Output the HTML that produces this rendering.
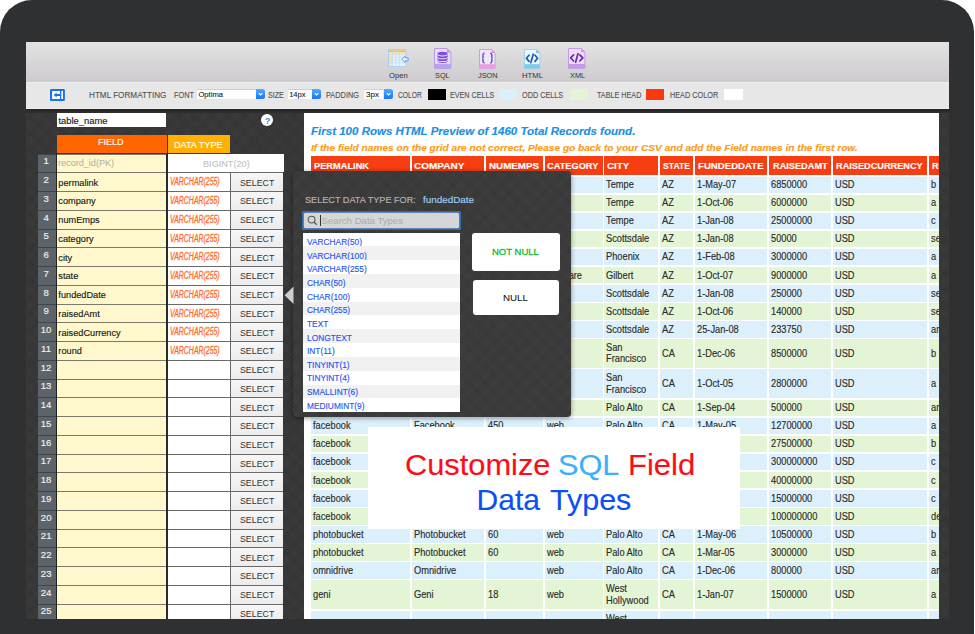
<!DOCTYPE html>
<html><head><meta charset="utf-8">
<style>
*{box-sizing:border-box;margin:0;padding:0}
html,body{width:975px;height:634px;overflow:hidden;background:#fff;font-family:"Liberation Sans",sans-serif}
.a{position:absolute}
.t{position:absolute;white-space:nowrap;transform-origin:0 0;-webkit-text-stroke:0.15px}
.frame{position:absolute;left:0;top:0;width:974px;height:760px;border-radius:32px;background:#2f3032}
.tex{background-color:#373737;background-image:repeating-linear-gradient(45deg,rgba(255,255,255,.03) 0 1px,transparent 1px 2px),repeating-linear-gradient(-45deg,rgba(0,0,0,.1) 0 1px,transparent 1px 2px)}
.sel{position:absolute;background:#fff;box-shadow:0 -0.6px 0 #bdbdbd}
.selb{position:absolute;background:linear-gradient(#55a8ff,#1677f5);border-radius:0 2.5px 2.5px 0}
.rn{position:absolute;left:37.6px;width:18.4px;background:#5c6369;border-top:1.3px solid #3f444a}
.fc{position:absolute;left:57px;width:109.3px;background:#fef8cc;border-top:1.4px solid #7d7a6c}
.tc{position:absolute;left:168px;width:61.5px;background:#fff;border-top:1.4px solid #6a6a6a}
.sc{position:absolute;left:231px;width:52.4px;background:linear-gradient(#f6f6f6,#ececec);border-top:1.4px solid #6a6a6a}
.ph{position:absolute;background:#f73d12}
.pc{position:absolute}
.li{position:absolute;left:303.3px;width:157px;height:13.815px}
.btn{position:absolute;background:#fff;border-radius:3px}
</style></head><body>
<div class="frame"></div>
<div class="a" style="left:26px;top:41.7px;width:923px;height:40.3px;background:linear-gradient(#e3e2e3,#cdcbcd)"></div>
<div class="a" style="left:26px;top:82px;width:923px;height:26.5px;background:#e7e7e7;border-top:1px solid #eeeeee;border-bottom:1px solid #f3f3f3"></div>
<div class="a tex" style="left:26px;top:109px;width:923px;height:510px"></div>
<div class="a" style="left:26px;top:108.5px;width:923px;height:4.5px;background:linear-gradient(#1e1e1e,#2a2a2a 40%,#2f2f2f)"></div>

<svg class="a" style="left:388px;top:48.9px" width="21" height="18" viewBox="0 0 21 18">
<rect x="0.5" y="0.5" width="17.3" height="17" fill="#fbfdff" stroke="#a9cff2" stroke-width="1"/>
<rect x="1" y="1.3" width="16.3" height="2.1" fill="#f7b84e"/>
<rect x="1" y="3.6" width="16.3" height="1.9" fill="#fde99a"/>
<rect x="1" y="3.6" width="3.2" height="13.4" fill="#fde99a"/>
<rect x="4.6" y="5.8" width="12.7" height="11" fill="#e9f4fd"/>
<g stroke="#bcd8f2" stroke-width=".7"><line x1="4.4" y1="1" x2="4.4" y2="17"/><line x1="7.8" y1="1" x2="7.8" y2="17"/><line x1="11.3" y1="1" x2="11.3" y2="17"/><line x1="1" y1="5.6" x2="17.3" y2="5.6"/><line x1="1" y1="8.3" x2="17.3" y2="8.3"/><line x1="1" y1="11" x2="17.3" y2="11"/><line x1="1" y1="13.7" x2="17.3" y2="13.7"/></g>
<path d="M13.8 10.3 L17.2 7.1 L17.2 8.8 L20.1 8.8 L20.1 11.8 L17.2 11.8 L17.2 13.5 Z" fill="#e8f6fe" stroke="#4d9be0" stroke-width=".9"/>
</svg>
<svg class="a" style="left:434.3px;top:48.1px" width="17.4" height="21" viewBox="0 0 17.4 21">
<path d="M0.5 0.5 H13.2 L16.9 4.2 V20.4 H0.5 Z" fill="#e6dbfb" stroke="#b69ce8" stroke-width="1"/>
<path d="M13 0.5 V4.4 H16.9 Z" fill="#b69ce8"/>
<rect x="0.5" y="15.8" width="16.4" height="4.6" fill="#b9a2ec"/>
<ellipse cx="8.6" cy="5.6" rx="5.1" ry="1.9" fill="#7d4fd2"/>
<path d="M3.5 6.6 v1.8 a5.1 1.9 0 0 0 10.2 0 v-1.8 a5.1 1.9 0 0 1 -10.2 0z" fill="#7d4fd2"/>
<path d="M3.5 9.4 v1.8 a5.1 1.9 0 0 0 10.2 0 v-1.8 a5.1 1.9 0 0 1 -10.2 0z" fill="#7d4fd2"/>
<path d="M3.5 12.2 v0.8 a5.1 1.9 0 0 0 10.2 0 v-0.8 a5.1 1.9 0 0 1 -10.2 0z" fill="#7d4fd2"/>
</svg>
<svg class="a" style="left:479.3px;top:48.9px" width="17" height="20" viewBox="0 0 17 20">
<path d="M0.5 0.5 H12.7 L16.1 3.9 V19.4 H0.5 Z" fill="#efe6fb" stroke="#b9a8e8" stroke-width="1"/>
<path d="M12.5 0.5 V4.1 H16.1 Z" fill="#f08ad8"/>
<rect x="0.5" y="15.2" width="15.6" height="4.4" fill="#ea9ee0"/>
<path d="M5.6 4.2 Q4 4.2 4 5.6 V8.2 Q4 9.3 3.2 9.3 Q4 9.3 4 10.4 V12.6 Q4 14 5.6 14" stroke="#6c58c0" stroke-width="1.5" fill="none"/>
<path d="M11.2 4.2 Q12.8 4.2 12.8 5.6 V8.2 Q12.8 9.3 13.6 9.3 Q12.8 9.3 12.8 10.4 V12.6 Q12.8 14 11.2 14" stroke="#6c58c0" stroke-width="1.5" fill="none"/>
</svg>
<svg class="a" style="left:524.3px;top:48.9px" width="17" height="20" viewBox="0 0 17 20">
<path d="M0.5 0.5 H12.4 L15.8 3.9 V19.4 H0.5 Z" fill="#e8f8fc" stroke="#9fd6ec" stroke-width="1"/>
<path d="M12.2 0.5 V4.1 H15.8 Z" fill="#6cc0e0"/>
<rect x="0.5" y="15.1" width="15.3" height="4.5" fill="#7fcbe6"/>
<path d="M5 6.2 L2.4 9.3 L5 12.4 M11 6.2 L13.6 9.3 L11 12.4 M9.2 5.2 L6.9 13.6" stroke="#1f55b5" stroke-width="1.7" fill="none" stroke-linecap="round" stroke-linejoin="round"/>
</svg>
<svg class="a" style="left:568.3px;top:48.1px" width="18" height="21" viewBox="0 0 18 21">
<path d="M0.5 0.5 H13.3 L16.9 4.1 V20.2 H0.5 Z" fill="#efdefb" stroke="#c39ae6" stroke-width="1"/>
<path d="M13.1 0.5 V4.3 H16.9 Z" fill="#c39ae6"/>
<rect x="0.5" y="15.9" width="16.4" height="4.7" fill="#c19be6"/>
<path d="M5.6 6.8 L2.6 9.9 L5.6 13 M11.8 6.8 L14.8 9.9 L11.8 13 M10 5.6 L7.6 14.2" stroke="#6a2aaa" stroke-width="1.7" fill="none" stroke-linecap="round" stroke-linejoin="round"/>
</svg>
<div class="t" style="left:388.65px;top:71.51px;font-size:7.9px;line-height:7.9px;color:#333;transform:scaleX(0.979);-webkit-text-stroke:0px">Open</div>
<div class="t" style="left:435.47px;top:71.51px;font-size:7.9px;line-height:7.9px;color:#333;transform:scaleX(0.927);-webkit-text-stroke:0px">SQL</div>
<div class="t" style="left:478.19px;top:71.51px;font-size:7.9px;line-height:7.9px;color:#333;transform:scaleX(0.936);-webkit-text-stroke:0px">JSON</div>
<div class="t" style="left:521.68px;top:71.51px;font-size:7.9px;line-height:7.9px;color:#333;transform:scaleX(0.975);-webkit-text-stroke:0px">HTML</div>
<div class="t" style="left:569.52px;top:71.51px;font-size:7.9px;line-height:7.9px;color:#333;transform:scaleX(0.930);-webkit-text-stroke:0px">XML</div>
<svg class="a" style="left:50.1px;top:89px" width="15" height="12" viewBox="0 0 15 12">
<rect x="0" y="0" width="14.9" height="12" rx="1.2" fill="#1a6ff5"/>
<rect x="2.1" y="2" width="7.9" height="8" fill="#fff"/>
<rect x="11.3" y="2" width="1.7" height="8" fill="#fff"/>
<path d="M3.7 6 L6.6 3.5 V5.1 H10 V6.9 H6.6 V8.5 Z" fill="#1a6ff5"/>
</svg>
<div class="t" style="left:88.95px;top:91.39px;font-size:8.4px;line-height:8.4px;color:#525252;transform:scaleX(0.973);-webkit-text-stroke:0.1px">HTML FORMATTING</div>
<div class="t" style="left:174.11px;top:91.39px;font-size:8.4px;line-height:8.4px;color:#525252;transform:scaleX(0.877);-webkit-text-stroke:0.1px">FONT</div>
<div class="t" style="left:268.38px;top:91.39px;font-size:8.4px;line-height:8.4px;color:#525252;transform:scaleX(0.853);-webkit-text-stroke:0.1px">SIZE</div>
<div class="t" style="left:326.41px;top:91.39px;font-size:8.4px;line-height:8.4px;color:#525252;transform:scaleX(0.880);-webkit-text-stroke:0.1px">PADDING</div>
<div class="t" style="left:398.26px;top:91.39px;font-size:8.4px;line-height:8.4px;color:#525252;transform:scaleX(0.805);-webkit-text-stroke:0.1px">COLOR</div>
<div class="t" style="left:450.02px;top:91.39px;font-size:8.4px;line-height:8.4px;color:#525252;transform:scaleX(0.857);-webkit-text-stroke:0.1px">EVEN CELLS</div>
<div class="t" style="left:522.37px;top:91.39px;font-size:8.4px;line-height:8.4px;color:#525252;transform:scaleX(0.867);-webkit-text-stroke:0.1px">ODD CELLS</div>
<div class="t" style="left:596.86px;top:91.39px;font-size:8.4px;line-height:8.4px;color:#525252;transform:scaleX(0.861);-webkit-text-stroke:0.1px">TABLE HEAD</div>
<div class="t" style="left:670.42px;top:91.39px;font-size:8.4px;line-height:8.4px;color:#525252;transform:scaleX(0.870);-webkit-text-stroke:0.1px">HEAD COLOR</div>
<div class="sel" style="left:197.2px;top:89.5px;width:58.60px;height:9.6px"></div>
<div class="selb" style="left:255.80px;top:88.9px;width:9.2px;height:10.2px"></div>
<svg class="a" style="left:255.80px;top:88.9px" width="9.2" height="10.2" viewBox="0 0 9.2 10.2"><path d="M2.8 4.2 L4.6 6 L6.4 4.2" stroke="#fff" stroke-width="1.1" fill="none"/></svg>
<div class="t" style="left:198.46px;top:90.77px;font-size:7.6px;line-height:7.6px;color:#1a1a1a;-webkit-text-stroke:0.1px">Optima</div>
<div class="sel" style="left:288.1px;top:89.5px;width:23.60px;height:9.6px"></div>
<div class="selb" style="left:311.70px;top:88.9px;width:9.2px;height:10.2px"></div>
<svg class="a" style="left:311.70px;top:88.9px" width="9.2" height="10.2" viewBox="0 0 9.2 10.2"><path d="M2.8 4.2 L4.6 6 L6.4 4.2" stroke="#fff" stroke-width="1.1" fill="none"/></svg>
<div class="t" style="left:289.13px;top:90.77px;font-size:7.6px;line-height:7.6px;color:#1a1a1a;-webkit-text-stroke:0.1px">14px</div>
<div class="sel" style="left:364.4px;top:89.5px;width:19.10px;height:9.6px"></div>
<div class="selb" style="left:383.50px;top:88.9px;width:9.2px;height:10.2px"></div>
<svg class="a" style="left:383.50px;top:88.9px" width="9.2" height="10.2" viewBox="0 0 9.2 10.2"><path d="M2.8 4.2 L4.6 6 L6.4 4.2" stroke="#fff" stroke-width="1.1" fill="none"/></svg>
<div class="t" style="left:365.72px;top:90.77px;font-size:7.6px;line-height:7.6px;color:#1a1a1a;transform:scaleX(1.051);-webkit-text-stroke:0.1px">3px</div>
<div class="a" style="left:428px;top:89.1px;width:17.90px;height:11.3px;background:#000"></div>
<div class="a" style="left:498.6px;top:89.1px;width:18.20px;height:11.3px;background:#dcf0fb"></div>
<div class="a" style="left:570.2px;top:89.1px;width:17.80px;height:11.3px;background:#e3f6d4"></div>
<div class="a" style="left:645.8px;top:89.1px;width:18.00px;height:11.3px;background:#f83a0e"></div>
<div class="a" style="left:724px;top:89.1px;width:18.60px;height:11.3px;background:#fff"></div>
<div class="a" style="left:57px;top:113.1px;width:109.3px;height:14.2px;background:#fff"></div>
<div class="t" style="left:58.46px;top:116.44px;font-size:9.4px;line-height:9.4px;color:#1a1a1a">table_name</div>
<div class="a" style="left:260.9px;top:114.1px;width:12.3px;height:12.1px;border-radius:50%;background:#fff"></div>
<div class="t" style="left:264.51px;top:115.77px;font-size:9.6px;line-height:9.6px;color:#1e8ff5;font-weight:bold;transform:scaleX(0.899);-webkit-text-stroke:0px">?</div>
<div class="a" style="left:57px;top:134.9px;width:109.5px;height:18.5px;background:#ff6600"></div>
<div class="t" style="left:98.28px;top:137.77px;font-size:8.9px;line-height:8.9px;color:#fff;transform:scaleX(1.014)">FIELD</div>
<div class="a" style="left:168px;top:135px;width:62px;height:18.4px;background:#ffb000"></div>
<div class="t" style="left:173.67px;top:140.87px;font-size:8.9px;line-height:8.9px;color:#fff;transform:scaleX(1.026)">DATA TYPE</div>
<div class="a" style="left:55.8px;top:153px;width:1.4px;height:466px;background:#222"></div>
<div class="a" style="left:166.3px;top:153px;width:1.7px;height:466px;background:#2a2a2a"></div>
<div class="rn" style="top:153.60px;height:18.75px"></div>
<div class="fc" style="top:153.60px;height:18.75px"></div>
<div class="t" style="left:43.39px;top:156.47px;font-size:9.6px;line-height:9.6px;color:#f2f2f2">1</div>
<div class="t" style="left:58.41px;top:159.41px;font-size:9.2px;line-height:9.2px;color:#b5b1a2;transform:scaleX(0.990);-webkit-text-stroke:0.05px">record_id(PK)</div>
<div class="a" style="left:168px;top:153.60px;width:115.5px;height:18.75px;background:#fff"></div>
<div class="t" style="left:202.77px;top:158.94px;font-size:9.4px;line-height:9.4px;color:#c4c4c4;transform:scaleX(0.974)">BIGINT(20)</div>
<div class="rn" style="top:172.35px;height:18.75px"></div>
<div class="fc" style="top:172.35px;height:18.75px"></div>
<div class="t" style="left:43.54px;top:175.22px;font-size:9.6px;line-height:9.6px;color:#f2f2f2">2</div>
<div class="tc" style="top:172.35px;height:18.75px"></div>
<div class="sc" style="top:172.35px;height:18.75px"></div>
<div class="t" style="left:58.36px;top:178.66px;font-size:9.2px;line-height:9.2px;color:#1a1a1a">permalink</div>
<div class="t" style="left:169.51px;top:177.48px;font-size:10px;line-height:10px;color:#ff6a28;font-style:italic;transform:scaleX(0.693);-webkit-text-stroke:0.3px">VARCHAR(255)</div>
<div class="t" style="left:239.6px;top:177.62px;font-size:9.6px;line-height:9.6px;color:#333;transform:scaleX(0.918);-webkit-text-stroke:0px">SELECT</div>
<div class="rn" style="top:191.10px;height:18.75px"></div>
<div class="fc" style="top:191.10px;height:18.75px"></div>
<div class="t" style="left:43.56px;top:193.97px;font-size:9.6px;line-height:9.6px;color:#f2f2f2">3</div>
<div class="tc" style="top:191.10px;height:18.75px"></div>
<div class="sc" style="top:191.10px;height:18.75px"></div>
<div class="t" style="left:58.36px;top:197.41px;font-size:9.2px;line-height:9.2px;color:#1a1a1a">company</div>
<div class="t" style="left:169.51px;top:196.23px;font-size:10px;line-height:10px;color:#ff6a28;font-style:italic;transform:scaleX(0.693);-webkit-text-stroke:0.3px">VARCHAR(255)</div>
<div class="t" style="left:239.6px;top:196.37px;font-size:9.6px;line-height:9.6px;color:#333;transform:scaleX(0.918);-webkit-text-stroke:0px">SELECT</div>
<div class="rn" style="top:209.85px;height:18.75px"></div>
<div class="fc" style="top:209.85px;height:18.75px"></div>
<div class="t" style="left:43.56px;top:212.72px;font-size:9.6px;line-height:9.6px;color:#f2f2f2">4</div>
<div class="tc" style="top:209.85px;height:18.75px"></div>
<div class="sc" style="top:209.85px;height:18.75px"></div>
<div class="t" style="left:58.36px;top:216.16px;font-size:9.2px;line-height:9.2px;color:#1a1a1a">numEmps</div>
<div class="t" style="left:169.51px;top:214.98px;font-size:10px;line-height:10px;color:#ff6a28;font-style:italic;transform:scaleX(0.693);-webkit-text-stroke:0.3px">VARCHAR(255)</div>
<div class="t" style="left:239.6px;top:215.12px;font-size:9.6px;line-height:9.6px;color:#333;transform:scaleX(0.918);-webkit-text-stroke:0px">SELECT</div>
<div class="rn" style="top:228.60px;height:18.75px"></div>
<div class="fc" style="top:228.60px;height:18.75px"></div>
<div class="t" style="left:43.54px;top:231.47px;font-size:9.6px;line-height:9.6px;color:#f2f2f2">5</div>
<div class="tc" style="top:228.60px;height:18.75px"></div>
<div class="sc" style="top:228.60px;height:18.75px"></div>
<div class="t" style="left:58.36px;top:234.91px;font-size:9.2px;line-height:9.2px;color:#1a1a1a">category</div>
<div class="t" style="left:169.51px;top:233.73px;font-size:10px;line-height:10px;color:#ff6a28;font-style:italic;transform:scaleX(0.693);-webkit-text-stroke:0.3px">VARCHAR(255)</div>
<div class="t" style="left:239.6px;top:233.87px;font-size:9.6px;line-height:9.6px;color:#333;transform:scaleX(0.918);-webkit-text-stroke:0px">SELECT</div>
<div class="rn" style="top:247.35px;height:18.75px"></div>
<div class="fc" style="top:247.35px;height:18.75px"></div>
<div class="t" style="left:43.49px;top:250.22px;font-size:9.6px;line-height:9.6px;color:#f2f2f2">6</div>
<div class="tc" style="top:247.35px;height:18.75px"></div>
<div class="sc" style="top:247.35px;height:18.75px"></div>
<div class="t" style="left:58.36px;top:253.66px;font-size:9.2px;line-height:9.2px;color:#1a1a1a">city</div>
<div class="t" style="left:169.51px;top:252.48px;font-size:10px;line-height:10px;color:#ff6a28;font-style:italic;transform:scaleX(0.693);-webkit-text-stroke:0.3px">VARCHAR(255)</div>
<div class="t" style="left:239.6px;top:252.62px;font-size:9.6px;line-height:9.6px;color:#333;transform:scaleX(0.918);-webkit-text-stroke:0px">SELECT</div>
<div class="rn" style="top:266.10px;height:18.75px"></div>
<div class="fc" style="top:266.10px;height:18.75px"></div>
<div class="t" style="left:43.54px;top:268.97px;font-size:9.6px;line-height:9.6px;color:#f2f2f2">7</div>
<div class="tc" style="top:266.10px;height:18.75px"></div>
<div class="sc" style="top:266.10px;height:18.75px"></div>
<div class="t" style="left:58.36px;top:272.41px;font-size:9.2px;line-height:9.2px;color:#1a1a1a">state</div>
<div class="t" style="left:169.51px;top:271.24px;font-size:10px;line-height:10px;color:#ff6a28;font-style:italic;transform:scaleX(0.693);-webkit-text-stroke:0.3px">VARCHAR(255)</div>
<div class="t" style="left:239.6px;top:271.37px;font-size:9.6px;line-height:9.6px;color:#333;transform:scaleX(0.918);-webkit-text-stroke:0px">SELECT</div>
<div class="rn" style="top:284.85px;height:18.75px"></div>
<div class="fc" style="top:284.85px;height:18.75px"></div>
<div class="t" style="left:43.54px;top:287.72px;font-size:9.6px;line-height:9.6px;color:#f2f2f2">8</div>
<div class="tc" style="top:284.85px;height:18.75px"></div>
<div class="sc" style="top:284.85px;height:18.75px"></div>
<div class="t" style="left:58.36px;top:291.16px;font-size:9.2px;line-height:9.2px;color:#1a1a1a">fundedDate</div>
<div class="t" style="left:169.51px;top:289.99px;font-size:10px;line-height:10px;color:#ff6a28;font-style:italic;transform:scaleX(0.693);-webkit-text-stroke:0.3px">VARCHAR(255)</div>
<div class="t" style="left:239.6px;top:290.12px;font-size:9.6px;line-height:9.6px;color:#333;transform:scaleX(0.918);-webkit-text-stroke:0px">SELECT</div>
<div class="rn" style="top:303.60px;height:18.75px"></div>
<div class="fc" style="top:303.60px;height:18.75px"></div>
<div class="t" style="left:43.54px;top:306.47px;font-size:9.6px;line-height:9.6px;color:#f2f2f2">9</div>
<div class="tc" style="top:303.60px;height:18.75px"></div>
<div class="sc" style="top:303.60px;height:18.75px"></div>
<div class="t" style="left:58.36px;top:309.91px;font-size:9.2px;line-height:9.2px;color:#1a1a1a">raisedAmt</div>
<div class="t" style="left:169.51px;top:308.74px;font-size:10px;line-height:10px;color:#ff6a28;font-style:italic;transform:scaleX(0.693);-webkit-text-stroke:0.3px">VARCHAR(255)</div>
<div class="t" style="left:239.6px;top:308.87px;font-size:9.6px;line-height:9.6px;color:#333;transform:scaleX(0.918);-webkit-text-stroke:0px">SELECT</div>
<div class="rn" style="top:322.35px;height:18.75px"></div>
<div class="fc" style="top:322.35px;height:18.75px"></div>
<div class="t" style="left:40.68px;top:325.22px;font-size:9.6px;line-height:9.6px;color:#f2f2f2">10</div>
<div class="tc" style="top:322.35px;height:18.75px"></div>
<div class="sc" style="top:322.35px;height:18.75px"></div>
<div class="t" style="left:58.36px;top:328.66px;font-size:9.2px;line-height:9.2px;color:#1a1a1a">raisedCurrency</div>
<div class="t" style="left:169.51px;top:327.49px;font-size:10px;line-height:10px;color:#ff6a28;font-style:italic;transform:scaleX(0.693);-webkit-text-stroke:0.3px">VARCHAR(255)</div>
<div class="t" style="left:239.6px;top:327.62px;font-size:9.6px;line-height:9.6px;color:#333;transform:scaleX(0.918);-webkit-text-stroke:0px">SELECT</div>
<div class="rn" style="top:341.10px;height:18.75px"></div>
<div class="fc" style="top:341.10px;height:18.75px"></div>
<div class="t" style="left:41.09px;top:343.97px;font-size:9.6px;line-height:9.6px;color:#f2f2f2">11</div>
<div class="tc" style="top:341.10px;height:18.75px"></div>
<div class="sc" style="top:341.10px;height:18.75px"></div>
<div class="t" style="left:58.36px;top:347.41px;font-size:9.2px;line-height:9.2px;color:#1a1a1a">round</div>
<div class="t" style="left:169.51px;top:346.24px;font-size:10px;line-height:10px;color:#ff6a28;font-style:italic;transform:scaleX(0.693);-webkit-text-stroke:0.3px">VARCHAR(255)</div>
<div class="t" style="left:239.6px;top:346.37px;font-size:9.6px;line-height:9.6px;color:#333;transform:scaleX(0.918);-webkit-text-stroke:0px">SELECT</div>
<div class="rn" style="top:359.85px;height:18.75px"></div>
<div class="fc" style="top:359.85px;height:18.75px"></div>
<div class="t" style="left:40.75px;top:362.72px;font-size:9.6px;line-height:9.6px;color:#f2f2f2">12</div>
<div class="tc" style="top:359.85px;height:18.75px"></div>
<div class="sc" style="top:359.85px;height:18.75px"></div>
<div class="t" style="left:239.6px;top:365.12px;font-size:9.6px;line-height:9.6px;color:#333;transform:scaleX(0.918);-webkit-text-stroke:0px">SELECT</div>
<div class="rn" style="top:378.60px;height:18.75px"></div>
<div class="fc" style="top:378.60px;height:18.75px"></div>
<div class="t" style="left:40.7px;top:381.47px;font-size:9.6px;line-height:9.6px;color:#f2f2f2">13</div>
<div class="tc" style="top:378.60px;height:18.75px"></div>
<div class="sc" style="top:378.60px;height:18.75px"></div>
<div class="t" style="left:239.6px;top:383.87px;font-size:9.6px;line-height:9.6px;color:#333;transform:scaleX(0.918);-webkit-text-stroke:0px">SELECT</div>
<div class="rn" style="top:397.35px;height:18.75px"></div>
<div class="fc" style="top:397.35px;height:18.75px"></div>
<div class="t" style="left:40.63px;top:400.22px;font-size:9.6px;line-height:9.6px;color:#f2f2f2">14</div>
<div class="tc" style="top:397.35px;height:18.75px"></div>
<div class="sc" style="top:397.35px;height:18.75px"></div>
<div class="t" style="left:239.6px;top:402.62px;font-size:9.6px;line-height:9.6px;color:#333;transform:scaleX(0.918);-webkit-text-stroke:0px">SELECT</div>
<div class="rn" style="top:416.10px;height:18.75px"></div>
<div class="fc" style="top:416.10px;height:18.75px"></div>
<div class="t" style="left:40.7px;top:418.97px;font-size:9.6px;line-height:9.6px;color:#f2f2f2">15</div>
<div class="tc" style="top:416.10px;height:18.75px"></div>
<div class="sc" style="top:416.10px;height:18.75px"></div>
<div class="t" style="left:239.6px;top:421.37px;font-size:9.6px;line-height:9.6px;color:#333;transform:scaleX(0.918);-webkit-text-stroke:0px">SELECT</div>
<div class="rn" style="top:434.85px;height:18.75px"></div>
<div class="fc" style="top:434.85px;height:18.75px"></div>
<div class="t" style="left:40.7px;top:437.72px;font-size:9.6px;line-height:9.6px;color:#f2f2f2">16</div>
<div class="tc" style="top:434.85px;height:18.75px"></div>
<div class="sc" style="top:434.85px;height:18.75px"></div>
<div class="t" style="left:239.6px;top:440.12px;font-size:9.6px;line-height:9.6px;color:#333;transform:scaleX(0.918);-webkit-text-stroke:0px">SELECT</div>
<div class="rn" style="top:453.60px;height:18.75px"></div>
<div class="fc" style="top:453.60px;height:18.75px"></div>
<div class="t" style="left:40.75px;top:456.47px;font-size:9.6px;line-height:9.6px;color:#f2f2f2">17</div>
<div class="tc" style="top:453.60px;height:18.75px"></div>
<div class="sc" style="top:453.60px;height:18.75px"></div>
<div class="t" style="left:239.6px;top:458.87px;font-size:9.6px;line-height:9.6px;color:#333;transform:scaleX(0.918);-webkit-text-stroke:0px">SELECT</div>
<div class="rn" style="top:472.35px;height:18.75px"></div>
<div class="fc" style="top:472.35px;height:18.75px"></div>
<div class="t" style="left:40.7px;top:475.22px;font-size:9.6px;line-height:9.6px;color:#f2f2f2">18</div>
<div class="tc" style="top:472.35px;height:18.75px"></div>
<div class="sc" style="top:472.35px;height:18.75px"></div>
<div class="t" style="left:239.6px;top:477.62px;font-size:9.6px;line-height:9.6px;color:#333;transform:scaleX(0.918);-webkit-text-stroke:0px">SELECT</div>
<div class="rn" style="top:491.10px;height:18.75px"></div>
<div class="fc" style="top:491.10px;height:18.75px"></div>
<div class="t" style="left:40.73px;top:493.97px;font-size:9.6px;line-height:9.6px;color:#f2f2f2">19</div>
<div class="tc" style="top:491.10px;height:18.75px"></div>
<div class="sc" style="top:491.10px;height:18.75px"></div>
<div class="t" style="left:239.6px;top:496.37px;font-size:9.6px;line-height:9.6px;color:#333;transform:scaleX(0.918);-webkit-text-stroke:0px">SELECT</div>
<div class="rn" style="top:509.85px;height:18.75px"></div>
<div class="fc" style="top:509.85px;height:18.75px"></div>
<div class="t" style="left:40.8px;top:512.72px;font-size:9.6px;line-height:9.6px;color:#f2f2f2">20</div>
<div class="tc" style="top:509.85px;height:18.75px"></div>
<div class="sc" style="top:509.85px;height:18.75px"></div>
<div class="t" style="left:239.6px;top:515.12px;font-size:9.6px;line-height:9.6px;color:#333;transform:scaleX(0.918);-webkit-text-stroke:0px">SELECT</div>
<div class="rn" style="top:528.60px;height:18.75px"></div>
<div class="fc" style="top:528.60px;height:18.75px"></div>
<div class="t" style="left:40.85px;top:531.47px;font-size:9.6px;line-height:9.6px;color:#f2f2f2">21</div>
<div class="tc" style="top:528.60px;height:18.75px"></div>
<div class="sc" style="top:528.60px;height:18.75px"></div>
<div class="t" style="left:239.6px;top:533.87px;font-size:9.6px;line-height:9.6px;color:#333;transform:scaleX(0.918);-webkit-text-stroke:0px">SELECT</div>
<div class="rn" style="top:547.35px;height:18.75px"></div>
<div class="fc" style="top:547.35px;height:18.75px"></div>
<div class="t" style="left:40.87px;top:550.22px;font-size:9.6px;line-height:9.6px;color:#f2f2f2">22</div>
<div class="tc" style="top:547.35px;height:18.75px"></div>
<div class="sc" style="top:547.35px;height:18.75px"></div>
<div class="t" style="left:239.6px;top:552.62px;font-size:9.6px;line-height:9.6px;color:#333;transform:scaleX(0.918);-webkit-text-stroke:0px">SELECT</div>
<div class="rn" style="top:566.10px;height:18.75px"></div>
<div class="fc" style="top:566.10px;height:18.75px"></div>
<div class="t" style="left:40.82px;top:568.97px;font-size:9.6px;line-height:9.6px;color:#f2f2f2">23</div>
<div class="tc" style="top:566.10px;height:18.75px"></div>
<div class="sc" style="top:566.10px;height:18.75px"></div>
<div class="t" style="left:239.6px;top:571.37px;font-size:9.6px;line-height:9.6px;color:#333;transform:scaleX(0.918);-webkit-text-stroke:0px">SELECT</div>
<div class="rn" style="top:584.85px;height:18.75px"></div>
<div class="fc" style="top:584.85px;height:18.75px"></div>
<div class="t" style="left:40.75px;top:587.72px;font-size:9.6px;line-height:9.6px;color:#f2f2f2">24</div>
<div class="tc" style="top:584.85px;height:18.75px"></div>
<div class="sc" style="top:584.85px;height:18.75px"></div>
<div class="t" style="left:239.6px;top:590.12px;font-size:9.6px;line-height:9.6px;color:#333;transform:scaleX(0.918);-webkit-text-stroke:0px">SELECT</div>
<div class="rn" style="top:603.60px;height:18.75px"></div>
<div class="fc" style="top:603.60px;height:18.75px"></div>
<div class="t" style="left:40.82px;top:606.47px;font-size:9.6px;line-height:9.6px;color:#f2f2f2">25</div>
<div class="tc" style="top:603.60px;height:18.75px"></div>
<div class="sc" style="top:603.60px;height:18.75px"></div>
<div class="t" style="left:239.6px;top:608.87px;font-size:9.6px;line-height:9.6px;color:#333;transform:scaleX(0.918);-webkit-text-stroke:0px">SELECT</div>
<div class="a" style="left:229.6px;top:172px;width:1.5px;height:447px;background:#6a6a6a"></div>
<div class="a" style="left:304px;top:113.4px;width:635px;height:505.4px;background:#fff;overflow:hidden">
<div class="t" style="left:6.53px;top:12.4px;font-size:10.75px;line-height:10.75px;color:#1a8fe3;font-weight:bold;font-style:italic;transform:scaleX(1.073)">First 100 Rows HTML Preview of 1460 Total Records found.</div>
<div class="t" style="left:6.55px;top:29.26px;font-size:9.5px;line-height:9.5px;color:#fd9a1c;font-weight:bold;font-style:italic;transform:scaleX(1.065)">If the field names on the grid are not correct, Please go back to your CSV and add the Field names in the first row.</div>
<div class="ph" style="left:7.10px;top:42.50px;width:98.90px;height:19.2px"></div>
<div class="t" style="left:10.4px;top:47.62px;font-size:9.9px;line-height:9.9px;color:#fff;font-weight:bold;transform:scaleX(0.937)">PERMALINK</div>
<div class="ph" style="left:107.70px;top:42.50px;width:72.50px;height:19.2px"></div>
<div class="t" style="left:110.3px;top:47.62px;font-size:9.9px;line-height:9.9px;color:#fff;font-weight:bold;transform:scaleX(1.014)">COMPANY</div>
<div class="ph" style="left:182.00px;top:42.50px;width:56.90px;height:19.2px"></div>
<div class="t" style="left:185.06px;top:47.62px;font-size:9.9px;line-height:9.9px;color:#fff;font-weight:bold;transform:scaleX(0.992)">NUMEMPS</div>
<div class="ph" style="left:241.00px;top:42.50px;width:57.60px;height:19.2px"></div>
<div class="t" style="left:243.43px;top:47.62px;font-size:9.9px;line-height:9.9px;color:#fff;font-weight:bold;transform:scaleX(0.935)">CATEGORY</div>
<div class="ph" style="left:300.10px;top:42.50px;width:54.10px;height:19.2px"></div>
<div class="t" style="left:303.21px;top:47.62px;font-size:9.9px;line-height:9.9px;color:#fff;font-weight:bold;transform:scaleX(0.983)">CITY</div>
<div class="ph" style="left:356.00px;top:42.50px;width:33.00px;height:19.2px"></div>
<div class="t" style="left:358.84px;top:47.62px;font-size:9.9px;line-height:9.9px;color:#fff;font-weight:bold;transform:scaleX(0.873)">STATE</div>
<div class="ph" style="left:390.70px;top:42.50px;width:72.60px;height:19.2px"></div>
<div class="t" style="left:393.87px;top:47.62px;font-size:9.9px;line-height:9.9px;color:#fff;font-weight:bold;transform:scaleX(0.975)">FUNDEDDATE</div>
<div class="ph" style="left:465.00px;top:42.50px;width:61.80px;height:19.2px"></div>
<div class="t" style="left:468.6px;top:47.62px;font-size:9.9px;line-height:9.9px;color:#fff;font-weight:bold;transform:scaleX(0.931)">RAISEDAMT</div>
<div class="ph" style="left:528.70px;top:42.50px;width:94.10px;height:19.2px"></div>
<div class="t" style="left:532.1px;top:47.62px;font-size:9.9px;line-height:9.9px;color:#fff;font-weight:bold;transform:scaleX(0.929)">RAISEDCURRENCY</div>
<div class="ph" style="left:624.70px;top:42.50px;width:61.30px;height:19.2px"></div>
<div class="t" style="left:628px;top:47.62px;font-size:9.9px;line-height:9.9px;color:#fff;font-weight:bold;transform:scaleX(0.930)">ROUND</div>
<div class="pc" style="left:7.10px;top:63.30px;width:98.90px;height:16.55px;background:#dcf0fb"></div>
<div class="t" style="left:8.95px;top:66.88px;font-size:10.3px;line-height:10.3px;color:#2b2b2b;transform:scaleX(0.900)">lifelock</div>
<div class="pc" style="left:107.70px;top:63.30px;width:72.50px;height:16.55px;background:#dcf0fb"></div>
<div class="t" style="left:109.55px;top:66.88px;font-size:10.3px;line-height:10.3px;color:#2b2b2b;transform:scaleX(0.900)">LifeLock</div>
<div class="pc" style="left:182.00px;top:63.30px;width:56.90px;height:16.55px;background:#dcf0fb"></div>
<div class="pc" style="left:241.00px;top:63.30px;width:57.60px;height:16.55px;background:#dcf0fb"></div>
<div class="t" style="left:242.85px;top:66.88px;font-size:10.3px;line-height:10.3px;color:#2b2b2b;transform:scaleX(0.900)">web</div>
<div class="pc" style="left:300.10px;top:63.30px;width:54.10px;height:16.55px;background:#dcf0fb"></div>
<div class="t" style="left:301.95px;top:66.88px;font-size:10.3px;line-height:10.3px;color:#2b2b2b;transform:scaleX(0.900)">Tempe</div>
<div class="pc" style="left:356.00px;top:63.30px;width:33.00px;height:16.55px;background:#dcf0fb"></div>
<div class="t" style="left:357.85px;top:66.88px;font-size:10.3px;line-height:10.3px;color:#2b2b2b;transform:scaleX(0.900)">AZ</div>
<div class="pc" style="left:390.70px;top:63.30px;width:72.60px;height:16.55px;background:#dcf0fb"></div>
<div class="t" style="left:392.55px;top:66.88px;font-size:10.3px;line-height:10.3px;color:#2b2b2b;transform:scaleX(0.900)">1-May-07</div>
<div class="pc" style="left:465.00px;top:63.30px;width:61.80px;height:16.55px;background:#dcf0fb"></div>
<div class="t" style="left:466.85px;top:66.88px;font-size:10.3px;line-height:10.3px;color:#2b2b2b;transform:scaleX(0.900)">6850000</div>
<div class="pc" style="left:528.70px;top:63.30px;width:94.10px;height:16.55px;background:#dcf0fb"></div>
<div class="t" style="left:530.55px;top:66.88px;font-size:10.3px;line-height:10.3px;color:#2b2b2b;transform:scaleX(0.900)">USD</div>
<div class="pc" style="left:624.70px;top:63.30px;width:61.30px;height:16.55px;background:#dcf0fb"></div>
<div class="t" style="left:626.55px;top:66.88px;font-size:10.3px;line-height:10.3px;color:#2b2b2b;transform:scaleX(0.900)">b</div>
<div class="pc" style="left:7.10px;top:81.35px;width:98.90px;height:16.55px;background:#e4f5d6"></div>
<div class="t" style="left:8.95px;top:84.93px;font-size:10.3px;line-height:10.3px;color:#2b2b2b;transform:scaleX(0.900)">lifelock</div>
<div class="pc" style="left:107.70px;top:81.35px;width:72.50px;height:16.55px;background:#e4f5d6"></div>
<div class="t" style="left:109.55px;top:84.93px;font-size:10.3px;line-height:10.3px;color:#2b2b2b;transform:scaleX(0.900)">LifeLock</div>
<div class="pc" style="left:182.00px;top:81.35px;width:56.90px;height:16.55px;background:#e4f5d6"></div>
<div class="pc" style="left:241.00px;top:81.35px;width:57.60px;height:16.55px;background:#e4f5d6"></div>
<div class="t" style="left:242.85px;top:84.93px;font-size:10.3px;line-height:10.3px;color:#2b2b2b;transform:scaleX(0.900)">web</div>
<div class="pc" style="left:300.10px;top:81.35px;width:54.10px;height:16.55px;background:#e4f5d6"></div>
<div class="t" style="left:301.95px;top:84.93px;font-size:10.3px;line-height:10.3px;color:#2b2b2b;transform:scaleX(0.900)">Tempe</div>
<div class="pc" style="left:356.00px;top:81.35px;width:33.00px;height:16.55px;background:#e4f5d6"></div>
<div class="t" style="left:357.85px;top:84.93px;font-size:10.3px;line-height:10.3px;color:#2b2b2b;transform:scaleX(0.900)">AZ</div>
<div class="pc" style="left:390.70px;top:81.35px;width:72.60px;height:16.55px;background:#e4f5d6"></div>
<div class="t" style="left:392.55px;top:84.93px;font-size:10.3px;line-height:10.3px;color:#2b2b2b;transform:scaleX(0.900)">1-Oct-06</div>
<div class="pc" style="left:465.00px;top:81.35px;width:61.80px;height:16.55px;background:#e4f5d6"></div>
<div class="t" style="left:466.85px;top:84.93px;font-size:10.3px;line-height:10.3px;color:#2b2b2b;transform:scaleX(0.900)">6000000</div>
<div class="pc" style="left:528.70px;top:81.35px;width:94.10px;height:16.55px;background:#e4f5d6"></div>
<div class="t" style="left:530.55px;top:84.93px;font-size:10.3px;line-height:10.3px;color:#2b2b2b;transform:scaleX(0.900)">USD</div>
<div class="pc" style="left:624.70px;top:81.35px;width:61.30px;height:16.55px;background:#e4f5d6"></div>
<div class="t" style="left:626.55px;top:84.93px;font-size:10.3px;line-height:10.3px;color:#2b2b2b;transform:scaleX(0.900)">a</div>
<div class="pc" style="left:7.10px;top:99.40px;width:98.90px;height:16.55px;background:#dcf0fb"></div>
<div class="t" style="left:8.95px;top:102.98px;font-size:10.3px;line-height:10.3px;color:#2b2b2b;transform:scaleX(0.900)">lifelock</div>
<div class="pc" style="left:107.70px;top:99.40px;width:72.50px;height:16.55px;background:#dcf0fb"></div>
<div class="t" style="left:109.55px;top:102.98px;font-size:10.3px;line-height:10.3px;color:#2b2b2b;transform:scaleX(0.900)">LifeLock</div>
<div class="pc" style="left:182.00px;top:99.40px;width:56.90px;height:16.55px;background:#dcf0fb"></div>
<div class="pc" style="left:241.00px;top:99.40px;width:57.60px;height:16.55px;background:#dcf0fb"></div>
<div class="t" style="left:242.85px;top:102.98px;font-size:10.3px;line-height:10.3px;color:#2b2b2b;transform:scaleX(0.900)">web</div>
<div class="pc" style="left:300.10px;top:99.40px;width:54.10px;height:16.55px;background:#dcf0fb"></div>
<div class="t" style="left:301.95px;top:102.98px;font-size:10.3px;line-height:10.3px;color:#2b2b2b;transform:scaleX(0.900)">Tempe</div>
<div class="pc" style="left:356.00px;top:99.40px;width:33.00px;height:16.55px;background:#dcf0fb"></div>
<div class="t" style="left:357.85px;top:102.98px;font-size:10.3px;line-height:10.3px;color:#2b2b2b;transform:scaleX(0.900)">AZ</div>
<div class="pc" style="left:390.70px;top:99.40px;width:72.60px;height:16.55px;background:#dcf0fb"></div>
<div class="t" style="left:392.55px;top:102.98px;font-size:10.3px;line-height:10.3px;color:#2b2b2b;transform:scaleX(0.900)">1-Jan-08</div>
<div class="pc" style="left:465.00px;top:99.40px;width:61.80px;height:16.55px;background:#dcf0fb"></div>
<div class="t" style="left:466.85px;top:102.98px;font-size:10.3px;line-height:10.3px;color:#2b2b2b;transform:scaleX(0.900)">25000000</div>
<div class="pc" style="left:528.70px;top:99.40px;width:94.10px;height:16.55px;background:#dcf0fb"></div>
<div class="t" style="left:530.55px;top:102.98px;font-size:10.3px;line-height:10.3px;color:#2b2b2b;transform:scaleX(0.900)">USD</div>
<div class="pc" style="left:624.70px;top:99.40px;width:61.30px;height:16.55px;background:#dcf0fb"></div>
<div class="t" style="left:626.55px;top:102.98px;font-size:10.3px;line-height:10.3px;color:#2b2b2b;transform:scaleX(0.900)">c</div>
<div class="pc" style="left:7.10px;top:117.45px;width:98.90px;height:16.55px;background:#e4f5d6"></div>
<div class="t" style="left:8.95px;top:121.03px;font-size:10.3px;line-height:10.3px;color:#2b2b2b;transform:scaleX(0.900)">mycityfaces</div>
<div class="pc" style="left:107.70px;top:117.45px;width:72.50px;height:16.55px;background:#e4f5d6"></div>
<div class="t" style="left:109.55px;top:121.03px;font-size:10.3px;line-height:10.3px;color:#2b2b2b;transform:scaleX(0.900)">MyCityFaces</div>
<div class="pc" style="left:182.00px;top:117.45px;width:56.90px;height:16.55px;background:#e4f5d6"></div>
<div class="t" style="left:183.85px;top:121.03px;font-size:10.3px;line-height:10.3px;color:#2b2b2b;transform:scaleX(0.900)">7</div>
<div class="pc" style="left:241.00px;top:117.45px;width:57.60px;height:16.55px;background:#e4f5d6"></div>
<div class="t" style="left:242.85px;top:121.03px;font-size:10.3px;line-height:10.3px;color:#2b2b2b;transform:scaleX(0.900)">web</div>
<div class="pc" style="left:300.10px;top:117.45px;width:54.10px;height:16.55px;background:#e4f5d6"></div>
<div class="t" style="left:301.95px;top:121.03px;font-size:10.3px;line-height:10.3px;color:#2b2b2b;transform:scaleX(0.900)">Scottsdale</div>
<div class="pc" style="left:356.00px;top:117.45px;width:33.00px;height:16.55px;background:#e4f5d6"></div>
<div class="t" style="left:357.85px;top:121.03px;font-size:10.3px;line-height:10.3px;color:#2b2b2b;transform:scaleX(0.900)">AZ</div>
<div class="pc" style="left:390.70px;top:117.45px;width:72.60px;height:16.55px;background:#e4f5d6"></div>
<div class="t" style="left:392.55px;top:121.03px;font-size:10.3px;line-height:10.3px;color:#2b2b2b;transform:scaleX(0.900)">1-Jan-08</div>
<div class="pc" style="left:465.00px;top:117.45px;width:61.80px;height:16.55px;background:#e4f5d6"></div>
<div class="t" style="left:466.85px;top:121.03px;font-size:10.3px;line-height:10.3px;color:#2b2b2b;transform:scaleX(0.900)">50000</div>
<div class="pc" style="left:528.70px;top:117.45px;width:94.10px;height:16.55px;background:#e4f5d6"></div>
<div class="t" style="left:530.55px;top:121.03px;font-size:10.3px;line-height:10.3px;color:#2b2b2b;transform:scaleX(0.900)">USD</div>
<div class="pc" style="left:624.70px;top:117.45px;width:61.30px;height:16.55px;background:#e4f5d6"></div>
<div class="t" style="left:626.55px;top:121.03px;font-size:10.3px;line-height:10.3px;color:#2b2b2b;transform:scaleX(0.900)">seed</div>
<div class="pc" style="left:7.10px;top:135.50px;width:98.90px;height:16.55px;background:#dcf0fb"></div>
<div class="t" style="left:8.95px;top:139.08px;font-size:10.3px;line-height:10.3px;color:#2b2b2b;transform:scaleX(0.900)">flypaper</div>
<div class="pc" style="left:107.70px;top:135.50px;width:72.50px;height:16.55px;background:#dcf0fb"></div>
<div class="t" style="left:109.55px;top:139.08px;font-size:10.3px;line-height:10.3px;color:#2b2b2b;transform:scaleX(0.900)">Flypaper</div>
<div class="pc" style="left:182.00px;top:135.50px;width:56.90px;height:16.55px;background:#dcf0fb"></div>
<div class="pc" style="left:241.00px;top:135.50px;width:57.60px;height:16.55px;background:#dcf0fb"></div>
<div class="t" style="left:242.85px;top:139.08px;font-size:10.3px;line-height:10.3px;color:#2b2b2b;transform:scaleX(0.900)">web</div>
<div class="pc" style="left:300.10px;top:135.50px;width:54.10px;height:16.55px;background:#dcf0fb"></div>
<div class="t" style="left:301.95px;top:139.08px;font-size:10.3px;line-height:10.3px;color:#2b2b2b;transform:scaleX(0.900)">Phoenix</div>
<div class="pc" style="left:356.00px;top:135.50px;width:33.00px;height:16.55px;background:#dcf0fb"></div>
<div class="t" style="left:357.85px;top:139.08px;font-size:10.3px;line-height:10.3px;color:#2b2b2b;transform:scaleX(0.900)">AZ</div>
<div class="pc" style="left:390.70px;top:135.50px;width:72.60px;height:16.55px;background:#dcf0fb"></div>
<div class="t" style="left:392.55px;top:139.08px;font-size:10.3px;line-height:10.3px;color:#2b2b2b;transform:scaleX(0.900)">1-Feb-08</div>
<div class="pc" style="left:465.00px;top:135.50px;width:61.80px;height:16.55px;background:#dcf0fb"></div>
<div class="t" style="left:466.85px;top:139.08px;font-size:10.3px;line-height:10.3px;color:#2b2b2b;transform:scaleX(0.900)">3000000</div>
<div class="pc" style="left:528.70px;top:135.50px;width:94.10px;height:16.55px;background:#dcf0fb"></div>
<div class="t" style="left:530.55px;top:139.08px;font-size:10.3px;line-height:10.3px;color:#2b2b2b;transform:scaleX(0.900)">USD</div>
<div class="pc" style="left:624.70px;top:135.50px;width:61.30px;height:16.55px;background:#dcf0fb"></div>
<div class="t" style="left:626.55px;top:139.08px;font-size:10.3px;line-height:10.3px;color:#2b2b2b;transform:scaleX(0.900)">a</div>
<div class="pc" style="left:7.10px;top:153.55px;width:98.90px;height:16.55px;background:#e4f5d6"></div>
<div class="t" style="left:8.95px;top:157.13px;font-size:10.3px;line-height:10.3px;color:#2b2b2b;transform:scaleX(0.900)">infusionsoft</div>
<div class="pc" style="left:107.70px;top:153.55px;width:72.50px;height:16.55px;background:#e4f5d6"></div>
<div class="t" style="left:109.55px;top:157.13px;font-size:10.3px;line-height:10.3px;color:#2b2b2b;transform:scaleX(0.900)">Infusionsoft</div>
<div class="pc" style="left:182.00px;top:153.55px;width:56.90px;height:16.55px;background:#e4f5d6"></div>
<div class="t" style="left:183.85px;top:157.13px;font-size:10.3px;line-height:10.3px;color:#2b2b2b;transform:scaleX(0.900)">105</div>
<div class="pc" style="left:241.00px;top:153.55px;width:57.60px;height:16.55px;background:#e4f5d6"></div>
<div class="t" style="left:242.85px;top:157.13px;font-size:10.3px;line-height:10.3px;color:#2b2b2b;transform:scaleX(0.900)">software</div>
<div class="pc" style="left:300.10px;top:153.55px;width:54.10px;height:16.55px;background:#e4f5d6"></div>
<div class="t" style="left:301.95px;top:157.13px;font-size:10.3px;line-height:10.3px;color:#2b2b2b;transform:scaleX(0.900)">Gilbert</div>
<div class="pc" style="left:356.00px;top:153.55px;width:33.00px;height:16.55px;background:#e4f5d6"></div>
<div class="t" style="left:357.85px;top:157.13px;font-size:10.3px;line-height:10.3px;color:#2b2b2b;transform:scaleX(0.900)">AZ</div>
<div class="pc" style="left:390.70px;top:153.55px;width:72.60px;height:16.55px;background:#e4f5d6"></div>
<div class="t" style="left:392.55px;top:157.13px;font-size:10.3px;line-height:10.3px;color:#2b2b2b;transform:scaleX(0.900)">1-Oct-07</div>
<div class="pc" style="left:465.00px;top:153.55px;width:61.80px;height:16.55px;background:#e4f5d6"></div>
<div class="t" style="left:466.85px;top:157.13px;font-size:10.3px;line-height:10.3px;color:#2b2b2b;transform:scaleX(0.900)">9000000</div>
<div class="pc" style="left:528.70px;top:153.55px;width:94.10px;height:16.55px;background:#e4f5d6"></div>
<div class="t" style="left:530.55px;top:157.13px;font-size:10.3px;line-height:10.3px;color:#2b2b2b;transform:scaleX(0.900)">USD</div>
<div class="pc" style="left:624.70px;top:153.55px;width:61.30px;height:16.55px;background:#e4f5d6"></div>
<div class="t" style="left:626.55px;top:157.13px;font-size:10.3px;line-height:10.3px;color:#2b2b2b;transform:scaleX(0.900)">a</div>
<div class="pc" style="left:7.10px;top:171.60px;width:98.90px;height:16.55px;background:#dcf0fb"></div>
<div class="t" style="left:8.95px;top:175.18px;font-size:10.3px;line-height:10.3px;color:#2b2b2b;transform:scaleX(0.900)">gauto</div>
<div class="pc" style="left:107.70px;top:171.60px;width:72.50px;height:16.55px;background:#dcf0fb"></div>
<div class="t" style="left:109.55px;top:175.18px;font-size:10.3px;line-height:10.3px;color:#2b2b2b;transform:scaleX(0.900)">gAuto</div>
<div class="pc" style="left:182.00px;top:171.60px;width:56.90px;height:16.55px;background:#dcf0fb"></div>
<div class="t" style="left:183.85px;top:175.18px;font-size:10.3px;line-height:10.3px;color:#2b2b2b;transform:scaleX(0.900)">4</div>
<div class="pc" style="left:241.00px;top:171.60px;width:57.60px;height:16.55px;background:#dcf0fb"></div>
<div class="t" style="left:242.85px;top:175.18px;font-size:10.3px;line-height:10.3px;color:#2b2b2b;transform:scaleX(0.900)">web</div>
<div class="pc" style="left:300.10px;top:171.60px;width:54.10px;height:16.55px;background:#dcf0fb"></div>
<div class="t" style="left:301.95px;top:175.18px;font-size:10.3px;line-height:10.3px;color:#2b2b2b;transform:scaleX(0.900)">Scottsdale</div>
<div class="pc" style="left:356.00px;top:171.60px;width:33.00px;height:16.55px;background:#dcf0fb"></div>
<div class="t" style="left:357.85px;top:175.18px;font-size:10.3px;line-height:10.3px;color:#2b2b2b;transform:scaleX(0.900)">AZ</div>
<div class="pc" style="left:390.70px;top:171.60px;width:72.60px;height:16.55px;background:#dcf0fb"></div>
<div class="t" style="left:392.55px;top:175.18px;font-size:10.3px;line-height:10.3px;color:#2b2b2b;transform:scaleX(0.900)">1-Jan-08</div>
<div class="pc" style="left:465.00px;top:171.60px;width:61.80px;height:16.55px;background:#dcf0fb"></div>
<div class="t" style="left:466.85px;top:175.18px;font-size:10.3px;line-height:10.3px;color:#2b2b2b;transform:scaleX(0.900)">250000</div>
<div class="pc" style="left:528.70px;top:171.60px;width:94.10px;height:16.55px;background:#dcf0fb"></div>
<div class="t" style="left:530.55px;top:175.18px;font-size:10.3px;line-height:10.3px;color:#2b2b2b;transform:scaleX(0.900)">USD</div>
<div class="pc" style="left:624.70px;top:171.60px;width:61.30px;height:16.55px;background:#dcf0fb"></div>
<div class="t" style="left:626.55px;top:175.18px;font-size:10.3px;line-height:10.3px;color:#2b2b2b;transform:scaleX(0.900)">seed</div>
<div class="pc" style="left:7.10px;top:189.65px;width:98.90px;height:16.55px;background:#e4f5d6"></div>
<div class="t" style="left:8.95px;top:193.23px;font-size:10.3px;line-height:10.3px;color:#2b2b2b;transform:scaleX(0.900)">chosenlist-com</div>
<div class="pc" style="left:107.70px;top:189.65px;width:72.50px;height:16.55px;background:#e4f5d6"></div>
<div class="t" style="left:109.55px;top:193.23px;font-size:10.3px;line-height:10.3px;color:#2b2b2b;transform:scaleX(0.900)">ChosenList.com</div>
<div class="pc" style="left:182.00px;top:189.65px;width:56.90px;height:16.55px;background:#e4f5d6"></div>
<div class="t" style="left:183.85px;top:193.23px;font-size:10.3px;line-height:10.3px;color:#2b2b2b;transform:scaleX(0.900)">5</div>
<div class="pc" style="left:241.00px;top:189.65px;width:57.60px;height:16.55px;background:#e4f5d6"></div>
<div class="t" style="left:242.85px;top:193.23px;font-size:10.3px;line-height:10.3px;color:#2b2b2b;transform:scaleX(0.900)">web</div>
<div class="pc" style="left:300.10px;top:189.65px;width:54.10px;height:16.55px;background:#e4f5d6"></div>
<div class="t" style="left:301.95px;top:193.23px;font-size:10.3px;line-height:10.3px;color:#2b2b2b;transform:scaleX(0.900)">Scottsdale</div>
<div class="pc" style="left:356.00px;top:189.65px;width:33.00px;height:16.55px;background:#e4f5d6"></div>
<div class="t" style="left:357.85px;top:193.23px;font-size:10.3px;line-height:10.3px;color:#2b2b2b;transform:scaleX(0.900)">AZ</div>
<div class="pc" style="left:390.70px;top:189.65px;width:72.60px;height:16.55px;background:#e4f5d6"></div>
<div class="t" style="left:392.55px;top:193.23px;font-size:10.3px;line-height:10.3px;color:#2b2b2b;transform:scaleX(0.900)">1-Oct-06</div>
<div class="pc" style="left:465.00px;top:189.65px;width:61.80px;height:16.55px;background:#e4f5d6"></div>
<div class="t" style="left:466.85px;top:193.23px;font-size:10.3px;line-height:10.3px;color:#2b2b2b;transform:scaleX(0.900)">140000</div>
<div class="pc" style="left:528.70px;top:189.65px;width:94.10px;height:16.55px;background:#e4f5d6"></div>
<div class="t" style="left:530.55px;top:193.23px;font-size:10.3px;line-height:10.3px;color:#2b2b2b;transform:scaleX(0.900)">USD</div>
<div class="pc" style="left:624.70px;top:189.65px;width:61.30px;height:16.55px;background:#e4f5d6"></div>
<div class="t" style="left:626.55px;top:193.23px;font-size:10.3px;line-height:10.3px;color:#2b2b2b;transform:scaleX(0.900)">seed</div>
<div class="pc" style="left:7.10px;top:207.70px;width:98.90px;height:16.55px;background:#dcf0fb"></div>
<div class="t" style="left:8.95px;top:211.28px;font-size:10.3px;line-height:10.3px;color:#2b2b2b;transform:scaleX(0.900)">chosenlist-com</div>
<div class="pc" style="left:107.70px;top:207.70px;width:72.50px;height:16.55px;background:#dcf0fb"></div>
<div class="t" style="left:109.55px;top:211.28px;font-size:10.3px;line-height:10.3px;color:#2b2b2b;transform:scaleX(0.900)">ChosenList.com</div>
<div class="pc" style="left:182.00px;top:207.70px;width:56.90px;height:16.55px;background:#dcf0fb"></div>
<div class="t" style="left:183.85px;top:211.28px;font-size:10.3px;line-height:10.3px;color:#2b2b2b;transform:scaleX(0.900)">5</div>
<div class="pc" style="left:241.00px;top:207.70px;width:57.60px;height:16.55px;background:#dcf0fb"></div>
<div class="t" style="left:242.85px;top:211.28px;font-size:10.3px;line-height:10.3px;color:#2b2b2b;transform:scaleX(0.900)">web</div>
<div class="pc" style="left:300.10px;top:207.70px;width:54.10px;height:16.55px;background:#dcf0fb"></div>
<div class="t" style="left:301.95px;top:211.28px;font-size:10.3px;line-height:10.3px;color:#2b2b2b;transform:scaleX(0.900)">Scottsdale</div>
<div class="pc" style="left:356.00px;top:207.70px;width:33.00px;height:16.55px;background:#dcf0fb"></div>
<div class="t" style="left:357.85px;top:211.28px;font-size:10.3px;line-height:10.3px;color:#2b2b2b;transform:scaleX(0.900)">AZ</div>
<div class="pc" style="left:390.70px;top:207.70px;width:72.60px;height:16.55px;background:#dcf0fb"></div>
<div class="t" style="left:392.55px;top:211.28px;font-size:10.3px;line-height:10.3px;color:#2b2b2b;transform:scaleX(0.900)">25-Jan-08</div>
<div class="pc" style="left:465.00px;top:207.70px;width:61.80px;height:16.55px;background:#dcf0fb"></div>
<div class="t" style="left:466.85px;top:211.28px;font-size:10.3px;line-height:10.3px;color:#2b2b2b;transform:scaleX(0.900)">233750</div>
<div class="pc" style="left:528.70px;top:207.70px;width:94.10px;height:16.55px;background:#dcf0fb"></div>
<div class="t" style="left:530.55px;top:211.28px;font-size:10.3px;line-height:10.3px;color:#2b2b2b;transform:scaleX(0.900)">USD</div>
<div class="pc" style="left:624.70px;top:207.70px;width:61.30px;height:16.55px;background:#dcf0fb"></div>
<div class="t" style="left:626.55px;top:211.28px;font-size:10.3px;line-height:10.3px;color:#2b2b2b;transform:scaleX(0.900)">angel</div>
<div class="pc" style="left:7.10px;top:225.75px;width:98.90px;height:28.8px;background:#e4f5d6"></div>
<div class="t" style="left:8.95px;top:235.23px;font-size:10.3px;line-height:10.3px;color:#2b2b2b;transform:scaleX(0.900)">digg</div>
<div class="pc" style="left:107.70px;top:225.75px;width:72.50px;height:28.8px;background:#e4f5d6"></div>
<div class="t" style="left:109.55px;top:235.23px;font-size:10.3px;line-height:10.3px;color:#2b2b2b;transform:scaleX(0.900)">Digg</div>
<div class="pc" style="left:182.00px;top:225.75px;width:56.90px;height:28.8px;background:#e4f5d6"></div>
<div class="t" style="left:183.85px;top:235.23px;font-size:10.3px;line-height:10.3px;color:#2b2b2b;transform:scaleX(0.900)">60</div>
<div class="pc" style="left:241.00px;top:225.75px;width:57.60px;height:28.8px;background:#e4f5d6"></div>
<div class="t" style="left:242.85px;top:235.23px;font-size:10.3px;line-height:10.3px;color:#2b2b2b;transform:scaleX(0.900)">web</div>
<div class="pc" style="left:300.10px;top:225.75px;width:54.10px;height:28.8px;background:#e4f5d6"></div>
<div class="t" style="left:301.95px;top:229.13px;font-size:10.3px;line-height:10.3px;color:#2b2b2b;transform:scaleX(0.900)">San</div>
<div class="t" style="left:301.95px;top:241.03px;font-size:10.3px;line-height:10.3px;color:#2b2b2b;transform:scaleX(0.900)">Francisco</div>
<div class="pc" style="left:356.00px;top:225.75px;width:33.00px;height:28.8px;background:#e4f5d6"></div>
<div class="t" style="left:357.85px;top:235.23px;font-size:10.3px;line-height:10.3px;color:#2b2b2b;transform:scaleX(0.900)">CA</div>
<div class="pc" style="left:390.70px;top:225.75px;width:72.60px;height:28.8px;background:#e4f5d6"></div>
<div class="t" style="left:392.55px;top:235.23px;font-size:10.3px;line-height:10.3px;color:#2b2b2b;transform:scaleX(0.900)">1-Dec-06</div>
<div class="pc" style="left:465.00px;top:225.75px;width:61.80px;height:28.8px;background:#e4f5d6"></div>
<div class="t" style="left:466.85px;top:235.23px;font-size:10.3px;line-height:10.3px;color:#2b2b2b;transform:scaleX(0.900)">8500000</div>
<div class="pc" style="left:528.70px;top:225.75px;width:94.10px;height:28.8px;background:#e4f5d6"></div>
<div class="t" style="left:530.55px;top:235.23px;font-size:10.3px;line-height:10.3px;color:#2b2b2b;transform:scaleX(0.900)">USD</div>
<div class="pc" style="left:624.70px;top:225.75px;width:61.30px;height:28.8px;background:#e4f5d6"></div>
<div class="t" style="left:626.55px;top:235.23px;font-size:10.3px;line-height:10.3px;color:#2b2b2b;transform:scaleX(0.900)">b</div>
<div class="pc" style="left:7.10px;top:256.05px;width:98.90px;height:28.8px;background:#dcf0fb"></div>
<div class="t" style="left:8.95px;top:265.53px;font-size:10.3px;line-height:10.3px;color:#2b2b2b;transform:scaleX(0.900)">digg</div>
<div class="pc" style="left:107.70px;top:256.05px;width:72.50px;height:28.8px;background:#dcf0fb"></div>
<div class="t" style="left:109.55px;top:265.53px;font-size:10.3px;line-height:10.3px;color:#2b2b2b;transform:scaleX(0.900)">Digg</div>
<div class="pc" style="left:182.00px;top:256.05px;width:56.90px;height:28.8px;background:#dcf0fb"></div>
<div class="t" style="left:183.85px;top:265.53px;font-size:10.3px;line-height:10.3px;color:#2b2b2b;transform:scaleX(0.900)">60</div>
<div class="pc" style="left:241.00px;top:256.05px;width:57.60px;height:28.8px;background:#dcf0fb"></div>
<div class="t" style="left:242.85px;top:265.53px;font-size:10.3px;line-height:10.3px;color:#2b2b2b;transform:scaleX(0.900)">web</div>
<div class="pc" style="left:300.10px;top:256.05px;width:54.10px;height:28.8px;background:#dcf0fb"></div>
<div class="t" style="left:301.95px;top:259.43px;font-size:10.3px;line-height:10.3px;color:#2b2b2b;transform:scaleX(0.900)">San</div>
<div class="t" style="left:301.95px;top:271.33px;font-size:10.3px;line-height:10.3px;color:#2b2b2b;transform:scaleX(0.900)">Francisco</div>
<div class="pc" style="left:356.00px;top:256.05px;width:33.00px;height:28.8px;background:#dcf0fb"></div>
<div class="t" style="left:357.85px;top:265.53px;font-size:10.3px;line-height:10.3px;color:#2b2b2b;transform:scaleX(0.900)">CA</div>
<div class="pc" style="left:390.70px;top:256.05px;width:72.60px;height:28.8px;background:#dcf0fb"></div>
<div class="t" style="left:392.55px;top:265.53px;font-size:10.3px;line-height:10.3px;color:#2b2b2b;transform:scaleX(0.900)">1-Oct-05</div>
<div class="pc" style="left:465.00px;top:256.05px;width:61.80px;height:28.8px;background:#dcf0fb"></div>
<div class="t" style="left:466.85px;top:265.53px;font-size:10.3px;line-height:10.3px;color:#2b2b2b;transform:scaleX(0.900)">2800000</div>
<div class="pc" style="left:528.70px;top:256.05px;width:94.10px;height:28.8px;background:#dcf0fb"></div>
<div class="t" style="left:530.55px;top:265.53px;font-size:10.3px;line-height:10.3px;color:#2b2b2b;transform:scaleX(0.900)">USD</div>
<div class="pc" style="left:624.70px;top:256.05px;width:61.30px;height:28.8px;background:#dcf0fb"></div>
<div class="t" style="left:626.55px;top:265.53px;font-size:10.3px;line-height:10.3px;color:#2b2b2b;transform:scaleX(0.900)">a</div>
<div class="pc" style="left:7.10px;top:286.35px;width:98.90px;height:16.55px;background:#e4f5d6"></div>
<div class="t" style="left:8.95px;top:289.93px;font-size:10.3px;line-height:10.3px;color:#2b2b2b;transform:scaleX(0.900)">facebook</div>
<div class="pc" style="left:107.70px;top:286.35px;width:72.50px;height:16.55px;background:#e4f5d6"></div>
<div class="t" style="left:109.55px;top:289.93px;font-size:10.3px;line-height:10.3px;color:#2b2b2b;transform:scaleX(0.900)">Facebook</div>
<div class="pc" style="left:182.00px;top:286.35px;width:56.90px;height:16.55px;background:#e4f5d6"></div>
<div class="t" style="left:183.85px;top:289.93px;font-size:10.3px;line-height:10.3px;color:#2b2b2b;transform:scaleX(0.900)">450</div>
<div class="pc" style="left:241.00px;top:286.35px;width:57.60px;height:16.55px;background:#e4f5d6"></div>
<div class="t" style="left:242.85px;top:289.93px;font-size:10.3px;line-height:10.3px;color:#2b2b2b;transform:scaleX(0.900)">web</div>
<div class="pc" style="left:300.10px;top:286.35px;width:54.10px;height:16.55px;background:#e4f5d6"></div>
<div class="t" style="left:301.95px;top:289.93px;font-size:10.3px;line-height:10.3px;color:#2b2b2b;transform:scaleX(0.900)">Palo Alto</div>
<div class="pc" style="left:356.00px;top:286.35px;width:33.00px;height:16.55px;background:#e4f5d6"></div>
<div class="t" style="left:357.85px;top:289.93px;font-size:10.3px;line-height:10.3px;color:#2b2b2b;transform:scaleX(0.900)">CA</div>
<div class="pc" style="left:390.70px;top:286.35px;width:72.60px;height:16.55px;background:#e4f5d6"></div>
<div class="t" style="left:392.55px;top:289.93px;font-size:10.3px;line-height:10.3px;color:#2b2b2b;transform:scaleX(0.900)">1-Sep-04</div>
<div class="pc" style="left:465.00px;top:286.35px;width:61.80px;height:16.55px;background:#e4f5d6"></div>
<div class="t" style="left:466.85px;top:289.93px;font-size:10.3px;line-height:10.3px;color:#2b2b2b;transform:scaleX(0.900)">500000</div>
<div class="pc" style="left:528.70px;top:286.35px;width:94.10px;height:16.55px;background:#e4f5d6"></div>
<div class="t" style="left:530.55px;top:289.93px;font-size:10.3px;line-height:10.3px;color:#2b2b2b;transform:scaleX(0.900)">USD</div>
<div class="pc" style="left:624.70px;top:286.35px;width:61.30px;height:16.55px;background:#e4f5d6"></div>
<div class="t" style="left:626.55px;top:289.93px;font-size:10.3px;line-height:10.3px;color:#2b2b2b;transform:scaleX(0.900)">angel</div>
<div class="pc" style="left:7.10px;top:304.40px;width:98.90px;height:16.55px;background:#dcf0fb"></div>
<div class="t" style="left:8.95px;top:307.98px;font-size:10.3px;line-height:10.3px;color:#2b2b2b;transform:scaleX(0.900)">facebook</div>
<div class="pc" style="left:107.70px;top:304.40px;width:72.50px;height:16.55px;background:#dcf0fb"></div>
<div class="t" style="left:109.55px;top:307.98px;font-size:10.3px;line-height:10.3px;color:#2b2b2b;transform:scaleX(0.900)">Facebook</div>
<div class="pc" style="left:182.00px;top:304.40px;width:56.90px;height:16.55px;background:#dcf0fb"></div>
<div class="t" style="left:183.85px;top:307.98px;font-size:10.3px;line-height:10.3px;color:#2b2b2b;transform:scaleX(0.900)">450</div>
<div class="pc" style="left:241.00px;top:304.40px;width:57.60px;height:16.55px;background:#dcf0fb"></div>
<div class="t" style="left:242.85px;top:307.98px;font-size:10.3px;line-height:10.3px;color:#2b2b2b;transform:scaleX(0.900)">web</div>
<div class="pc" style="left:300.10px;top:304.40px;width:54.10px;height:16.55px;background:#dcf0fb"></div>
<div class="t" style="left:301.95px;top:307.98px;font-size:10.3px;line-height:10.3px;color:#2b2b2b;transform:scaleX(0.900)">Palo Alto</div>
<div class="pc" style="left:356.00px;top:304.40px;width:33.00px;height:16.55px;background:#dcf0fb"></div>
<div class="t" style="left:357.85px;top:307.98px;font-size:10.3px;line-height:10.3px;color:#2b2b2b;transform:scaleX(0.900)">CA</div>
<div class="pc" style="left:390.70px;top:304.40px;width:72.60px;height:16.55px;background:#dcf0fb"></div>
<div class="t" style="left:392.55px;top:307.98px;font-size:10.3px;line-height:10.3px;color:#2b2b2b;transform:scaleX(0.900)">1-May-05</div>
<div class="pc" style="left:465.00px;top:304.40px;width:61.80px;height:16.55px;background:#dcf0fb"></div>
<div class="t" style="left:466.85px;top:307.98px;font-size:10.3px;line-height:10.3px;color:#2b2b2b;transform:scaleX(0.900)">12700000</div>
<div class="pc" style="left:528.70px;top:304.40px;width:94.10px;height:16.55px;background:#dcf0fb"></div>
<div class="t" style="left:530.55px;top:307.98px;font-size:10.3px;line-height:10.3px;color:#2b2b2b;transform:scaleX(0.900)">USD</div>
<div class="pc" style="left:624.70px;top:304.40px;width:61.30px;height:16.55px;background:#dcf0fb"></div>
<div class="t" style="left:626.55px;top:307.98px;font-size:10.3px;line-height:10.3px;color:#2b2b2b;transform:scaleX(0.900)">a</div>
<div class="pc" style="left:7.10px;top:322.45px;width:98.90px;height:16.55px;background:#e4f5d6"></div>
<div class="t" style="left:8.95px;top:326.03px;font-size:10.3px;line-height:10.3px;color:#2b2b2b;transform:scaleX(0.900)">facebook</div>
<div class="pc" style="left:107.70px;top:322.45px;width:72.50px;height:16.55px;background:#e4f5d6"></div>
<div class="t" style="left:109.55px;top:326.03px;font-size:10.3px;line-height:10.3px;color:#2b2b2b;transform:scaleX(0.900)">Facebook</div>
<div class="pc" style="left:182.00px;top:322.45px;width:56.90px;height:16.55px;background:#e4f5d6"></div>
<div class="t" style="left:183.85px;top:326.03px;font-size:10.3px;line-height:10.3px;color:#2b2b2b;transform:scaleX(0.900)">450</div>
<div class="pc" style="left:241.00px;top:322.45px;width:57.60px;height:16.55px;background:#e4f5d6"></div>
<div class="t" style="left:242.85px;top:326.03px;font-size:10.3px;line-height:10.3px;color:#2b2b2b;transform:scaleX(0.900)">web</div>
<div class="pc" style="left:300.10px;top:322.45px;width:54.10px;height:16.55px;background:#e4f5d6"></div>
<div class="t" style="left:301.95px;top:326.03px;font-size:10.3px;line-height:10.3px;color:#2b2b2b;transform:scaleX(0.900)">Palo Alto</div>
<div class="pc" style="left:356.00px;top:322.45px;width:33.00px;height:16.55px;background:#e4f5d6"></div>
<div class="t" style="left:357.85px;top:326.03px;font-size:10.3px;line-height:10.3px;color:#2b2b2b;transform:scaleX(0.900)">CA</div>
<div class="pc" style="left:390.70px;top:322.45px;width:72.60px;height:16.55px;background:#e4f5d6"></div>
<div class="t" style="left:392.55px;top:326.03px;font-size:10.3px;line-height:10.3px;color:#2b2b2b;transform:scaleX(0.900)">1-Apr-06</div>
<div class="pc" style="left:465.00px;top:322.45px;width:61.80px;height:16.55px;background:#e4f5d6"></div>
<div class="t" style="left:466.85px;top:326.03px;font-size:10.3px;line-height:10.3px;color:#2b2b2b;transform:scaleX(0.900)">27500000</div>
<div class="pc" style="left:528.70px;top:322.45px;width:94.10px;height:16.55px;background:#e4f5d6"></div>
<div class="t" style="left:530.55px;top:326.03px;font-size:10.3px;line-height:10.3px;color:#2b2b2b;transform:scaleX(0.900)">USD</div>
<div class="pc" style="left:624.70px;top:322.45px;width:61.30px;height:16.55px;background:#e4f5d6"></div>
<div class="t" style="left:626.55px;top:326.03px;font-size:10.3px;line-height:10.3px;color:#2b2b2b;transform:scaleX(0.900)">b</div>
<div class="pc" style="left:7.10px;top:340.50px;width:98.90px;height:16.55px;background:#dcf0fb"></div>
<div class="t" style="left:8.95px;top:344.08px;font-size:10.3px;line-height:10.3px;color:#2b2b2b;transform:scaleX(0.900)">facebook</div>
<div class="pc" style="left:107.70px;top:340.50px;width:72.50px;height:16.55px;background:#dcf0fb"></div>
<div class="t" style="left:109.55px;top:344.08px;font-size:10.3px;line-height:10.3px;color:#2b2b2b;transform:scaleX(0.900)">Facebook</div>
<div class="pc" style="left:182.00px;top:340.50px;width:56.90px;height:16.55px;background:#dcf0fb"></div>
<div class="t" style="left:183.85px;top:344.08px;font-size:10.3px;line-height:10.3px;color:#2b2b2b;transform:scaleX(0.900)">450</div>
<div class="pc" style="left:241.00px;top:340.50px;width:57.60px;height:16.55px;background:#dcf0fb"></div>
<div class="t" style="left:242.85px;top:344.08px;font-size:10.3px;line-height:10.3px;color:#2b2b2b;transform:scaleX(0.900)">web</div>
<div class="pc" style="left:300.10px;top:340.50px;width:54.10px;height:16.55px;background:#dcf0fb"></div>
<div class="t" style="left:301.95px;top:344.08px;font-size:10.3px;line-height:10.3px;color:#2b2b2b;transform:scaleX(0.900)">Palo Alto</div>
<div class="pc" style="left:356.00px;top:340.50px;width:33.00px;height:16.55px;background:#dcf0fb"></div>
<div class="t" style="left:357.85px;top:344.08px;font-size:10.3px;line-height:10.3px;color:#2b2b2b;transform:scaleX(0.900)">CA</div>
<div class="pc" style="left:390.70px;top:340.50px;width:72.60px;height:16.55px;background:#dcf0fb"></div>
<div class="t" style="left:392.55px;top:344.08px;font-size:10.3px;line-height:10.3px;color:#2b2b2b;transform:scaleX(0.900)">1-Oct-07</div>
<div class="pc" style="left:465.00px;top:340.50px;width:61.80px;height:16.55px;background:#dcf0fb"></div>
<div class="t" style="left:466.85px;top:344.08px;font-size:10.3px;line-height:10.3px;color:#2b2b2b;transform:scaleX(0.900)">300000000</div>
<div class="pc" style="left:528.70px;top:340.50px;width:94.10px;height:16.55px;background:#dcf0fb"></div>
<div class="t" style="left:530.55px;top:344.08px;font-size:10.3px;line-height:10.3px;color:#2b2b2b;transform:scaleX(0.900)">USD</div>
<div class="pc" style="left:624.70px;top:340.50px;width:61.30px;height:16.55px;background:#dcf0fb"></div>
<div class="t" style="left:626.55px;top:344.08px;font-size:10.3px;line-height:10.3px;color:#2b2b2b;transform:scaleX(0.900)">c</div>
<div class="pc" style="left:7.10px;top:358.55px;width:98.90px;height:16.55px;background:#e4f5d6"></div>
<div class="t" style="left:8.95px;top:362.13px;font-size:10.3px;line-height:10.3px;color:#2b2b2b;transform:scaleX(0.900)">facebook</div>
<div class="pc" style="left:107.70px;top:358.55px;width:72.50px;height:16.55px;background:#e4f5d6"></div>
<div class="t" style="left:109.55px;top:362.13px;font-size:10.3px;line-height:10.3px;color:#2b2b2b;transform:scaleX(0.900)">Facebook</div>
<div class="pc" style="left:182.00px;top:358.55px;width:56.90px;height:16.55px;background:#e4f5d6"></div>
<div class="t" style="left:183.85px;top:362.13px;font-size:10.3px;line-height:10.3px;color:#2b2b2b;transform:scaleX(0.900)">450</div>
<div class="pc" style="left:241.00px;top:358.55px;width:57.60px;height:16.55px;background:#e4f5d6"></div>
<div class="t" style="left:242.85px;top:362.13px;font-size:10.3px;line-height:10.3px;color:#2b2b2b;transform:scaleX(0.900)">web</div>
<div class="pc" style="left:300.10px;top:358.55px;width:54.10px;height:16.55px;background:#e4f5d6"></div>
<div class="t" style="left:301.95px;top:362.13px;font-size:10.3px;line-height:10.3px;color:#2b2b2b;transform:scaleX(0.900)">Palo Alto</div>
<div class="pc" style="left:356.00px;top:358.55px;width:33.00px;height:16.55px;background:#e4f5d6"></div>
<div class="t" style="left:357.85px;top:362.13px;font-size:10.3px;line-height:10.3px;color:#2b2b2b;transform:scaleX(0.900)">CA</div>
<div class="pc" style="left:390.70px;top:358.55px;width:72.60px;height:16.55px;background:#e4f5d6"></div>
<div class="t" style="left:392.55px;top:362.13px;font-size:10.3px;line-height:10.3px;color:#2b2b2b;transform:scaleX(0.900)">1-Mar-08</div>
<div class="pc" style="left:465.00px;top:358.55px;width:61.80px;height:16.55px;background:#e4f5d6"></div>
<div class="t" style="left:466.85px;top:362.13px;font-size:10.3px;line-height:10.3px;color:#2b2b2b;transform:scaleX(0.900)">40000000</div>
<div class="pc" style="left:528.70px;top:358.55px;width:94.10px;height:16.55px;background:#e4f5d6"></div>
<div class="t" style="left:530.55px;top:362.13px;font-size:10.3px;line-height:10.3px;color:#2b2b2b;transform:scaleX(0.900)">USD</div>
<div class="pc" style="left:624.70px;top:358.55px;width:61.30px;height:16.55px;background:#e4f5d6"></div>
<div class="t" style="left:626.55px;top:362.13px;font-size:10.3px;line-height:10.3px;color:#2b2b2b;transform:scaleX(0.900)">c</div>
<div class="pc" style="left:7.10px;top:376.60px;width:98.90px;height:16.55px;background:#dcf0fb"></div>
<div class="t" style="left:8.95px;top:380.18px;font-size:10.3px;line-height:10.3px;color:#2b2b2b;transform:scaleX(0.900)">facebook</div>
<div class="pc" style="left:107.70px;top:376.60px;width:72.50px;height:16.55px;background:#dcf0fb"></div>
<div class="t" style="left:109.55px;top:380.18px;font-size:10.3px;line-height:10.3px;color:#2b2b2b;transform:scaleX(0.900)">Facebook</div>
<div class="pc" style="left:182.00px;top:376.60px;width:56.90px;height:16.55px;background:#dcf0fb"></div>
<div class="t" style="left:183.85px;top:380.18px;font-size:10.3px;line-height:10.3px;color:#2b2b2b;transform:scaleX(0.900)">450</div>
<div class="pc" style="left:241.00px;top:376.60px;width:57.60px;height:16.55px;background:#dcf0fb"></div>
<div class="t" style="left:242.85px;top:380.18px;font-size:10.3px;line-height:10.3px;color:#2b2b2b;transform:scaleX(0.900)">web</div>
<div class="pc" style="left:300.10px;top:376.60px;width:54.10px;height:16.55px;background:#dcf0fb"></div>
<div class="t" style="left:301.95px;top:380.18px;font-size:10.3px;line-height:10.3px;color:#2b2b2b;transform:scaleX(0.900)">Palo Alto</div>
<div class="pc" style="left:356.00px;top:376.60px;width:33.00px;height:16.55px;background:#dcf0fb"></div>
<div class="t" style="left:357.85px;top:380.18px;font-size:10.3px;line-height:10.3px;color:#2b2b2b;transform:scaleX(0.900)">CA</div>
<div class="pc" style="left:390.70px;top:376.60px;width:72.60px;height:16.55px;background:#dcf0fb"></div>
<div class="t" style="left:392.55px;top:380.18px;font-size:10.3px;line-height:10.3px;color:#2b2b2b;transform:scaleX(0.900)">1-Jan-08</div>
<div class="pc" style="left:465.00px;top:376.60px;width:61.80px;height:16.55px;background:#dcf0fb"></div>
<div class="t" style="left:466.85px;top:380.18px;font-size:10.3px;line-height:10.3px;color:#2b2b2b;transform:scaleX(0.900)">15000000</div>
<div class="pc" style="left:528.70px;top:376.60px;width:94.10px;height:16.55px;background:#dcf0fb"></div>
<div class="t" style="left:530.55px;top:380.18px;font-size:10.3px;line-height:10.3px;color:#2b2b2b;transform:scaleX(0.900)">USD</div>
<div class="pc" style="left:624.70px;top:376.60px;width:61.30px;height:16.55px;background:#dcf0fb"></div>
<div class="t" style="left:626.55px;top:380.18px;font-size:10.3px;line-height:10.3px;color:#2b2b2b;transform:scaleX(0.900)">c</div>
<div class="pc" style="left:7.10px;top:394.65px;width:98.90px;height:16.55px;background:#e4f5d6"></div>
<div class="t" style="left:8.95px;top:398.23px;font-size:10.3px;line-height:10.3px;color:#2b2b2b;transform:scaleX(0.900)">facebook</div>
<div class="pc" style="left:107.70px;top:394.65px;width:72.50px;height:16.55px;background:#e4f5d6"></div>
<div class="t" style="left:109.55px;top:398.23px;font-size:10.3px;line-height:10.3px;color:#2b2b2b;transform:scaleX(0.900)">Facebook</div>
<div class="pc" style="left:182.00px;top:394.65px;width:56.90px;height:16.55px;background:#e4f5d6"></div>
<div class="t" style="left:183.85px;top:398.23px;font-size:10.3px;line-height:10.3px;color:#2b2b2b;transform:scaleX(0.900)">450</div>
<div class="pc" style="left:241.00px;top:394.65px;width:57.60px;height:16.55px;background:#e4f5d6"></div>
<div class="t" style="left:242.85px;top:398.23px;font-size:10.3px;line-height:10.3px;color:#2b2b2b;transform:scaleX(0.900)">web</div>
<div class="pc" style="left:300.10px;top:394.65px;width:54.10px;height:16.55px;background:#e4f5d6"></div>
<div class="t" style="left:301.95px;top:398.23px;font-size:10.3px;line-height:10.3px;color:#2b2b2b;transform:scaleX(0.900)">Palo Alto</div>
<div class="pc" style="left:356.00px;top:394.65px;width:33.00px;height:16.55px;background:#e4f5d6"></div>
<div class="t" style="left:357.85px;top:398.23px;font-size:10.3px;line-height:10.3px;color:#2b2b2b;transform:scaleX(0.900)">CA</div>
<div class="pc" style="left:390.70px;top:394.65px;width:72.60px;height:16.55px;background:#e4f5d6"></div>
<div class="t" style="left:392.55px;top:398.23px;font-size:10.3px;line-height:10.3px;color:#2b2b2b;transform:scaleX(0.900)">1-Aug-08</div>
<div class="pc" style="left:465.00px;top:394.65px;width:61.80px;height:16.55px;background:#e4f5d6"></div>
<div class="t" style="left:466.85px;top:398.23px;font-size:10.3px;line-height:10.3px;color:#2b2b2b;transform:scaleX(0.900)">100000000</div>
<div class="pc" style="left:528.70px;top:394.65px;width:94.10px;height:16.55px;background:#e4f5d6"></div>
<div class="t" style="left:530.55px;top:398.23px;font-size:10.3px;line-height:10.3px;color:#2b2b2b;transform:scaleX(0.900)">USD</div>
<div class="pc" style="left:624.70px;top:394.65px;width:61.30px;height:16.55px;background:#e4f5d6"></div>
<div class="t" style="left:626.55px;top:398.23px;font-size:10.3px;line-height:10.3px;color:#2b2b2b;transform:scaleX(0.900)">debt_round</div>
<div class="pc" style="left:7.10px;top:412.70px;width:98.90px;height:16.55px;background:#dcf0fb"></div>
<div class="t" style="left:8.95px;top:416.28px;font-size:10.3px;line-height:10.3px;color:#2b2b2b;transform:scaleX(0.900)">photobucket</div>
<div class="pc" style="left:107.70px;top:412.70px;width:72.50px;height:16.55px;background:#dcf0fb"></div>
<div class="t" style="left:109.55px;top:416.28px;font-size:10.3px;line-height:10.3px;color:#2b2b2b;transform:scaleX(0.900)">Photobucket</div>
<div class="pc" style="left:182.00px;top:412.70px;width:56.90px;height:16.55px;background:#dcf0fb"></div>
<div class="t" style="left:183.85px;top:416.28px;font-size:10.3px;line-height:10.3px;color:#2b2b2b;transform:scaleX(0.900)">60</div>
<div class="pc" style="left:241.00px;top:412.70px;width:57.60px;height:16.55px;background:#dcf0fb"></div>
<div class="t" style="left:242.85px;top:416.28px;font-size:10.3px;line-height:10.3px;color:#2b2b2b;transform:scaleX(0.900)">web</div>
<div class="pc" style="left:300.10px;top:412.70px;width:54.10px;height:16.55px;background:#dcf0fb"></div>
<div class="t" style="left:301.95px;top:416.28px;font-size:10.3px;line-height:10.3px;color:#2b2b2b;transform:scaleX(0.900)">Palo Alto</div>
<div class="pc" style="left:356.00px;top:412.70px;width:33.00px;height:16.55px;background:#dcf0fb"></div>
<div class="t" style="left:357.85px;top:416.28px;font-size:10.3px;line-height:10.3px;color:#2b2b2b;transform:scaleX(0.900)">CA</div>
<div class="pc" style="left:390.70px;top:412.70px;width:72.60px;height:16.55px;background:#dcf0fb"></div>
<div class="t" style="left:392.55px;top:416.28px;font-size:10.3px;line-height:10.3px;color:#2b2b2b;transform:scaleX(0.900)">1-May-06</div>
<div class="pc" style="left:465.00px;top:412.70px;width:61.80px;height:16.55px;background:#dcf0fb"></div>
<div class="t" style="left:466.85px;top:416.28px;font-size:10.3px;line-height:10.3px;color:#2b2b2b;transform:scaleX(0.900)">10500000</div>
<div class="pc" style="left:528.70px;top:412.70px;width:94.10px;height:16.55px;background:#dcf0fb"></div>
<div class="t" style="left:530.55px;top:416.28px;font-size:10.3px;line-height:10.3px;color:#2b2b2b;transform:scaleX(0.900)">USD</div>
<div class="pc" style="left:624.70px;top:412.70px;width:61.30px;height:16.55px;background:#dcf0fb"></div>
<div class="t" style="left:626.55px;top:416.28px;font-size:10.3px;line-height:10.3px;color:#2b2b2b;transform:scaleX(0.900)">b</div>
<div class="pc" style="left:7.10px;top:430.75px;width:98.90px;height:16.55px;background:#e4f5d6"></div>
<div class="t" style="left:8.95px;top:434.33px;font-size:10.3px;line-height:10.3px;color:#2b2b2b;transform:scaleX(0.900)">photobucket</div>
<div class="pc" style="left:107.70px;top:430.75px;width:72.50px;height:16.55px;background:#e4f5d6"></div>
<div class="t" style="left:109.55px;top:434.33px;font-size:10.3px;line-height:10.3px;color:#2b2b2b;transform:scaleX(0.900)">Photobucket</div>
<div class="pc" style="left:182.00px;top:430.75px;width:56.90px;height:16.55px;background:#e4f5d6"></div>
<div class="t" style="left:183.85px;top:434.33px;font-size:10.3px;line-height:10.3px;color:#2b2b2b;transform:scaleX(0.900)">60</div>
<div class="pc" style="left:241.00px;top:430.75px;width:57.60px;height:16.55px;background:#e4f5d6"></div>
<div class="t" style="left:242.85px;top:434.33px;font-size:10.3px;line-height:10.3px;color:#2b2b2b;transform:scaleX(0.900)">web</div>
<div class="pc" style="left:300.10px;top:430.75px;width:54.10px;height:16.55px;background:#e4f5d6"></div>
<div class="t" style="left:301.95px;top:434.33px;font-size:10.3px;line-height:10.3px;color:#2b2b2b;transform:scaleX(0.900)">Palo Alto</div>
<div class="pc" style="left:356.00px;top:430.75px;width:33.00px;height:16.55px;background:#e4f5d6"></div>
<div class="t" style="left:357.85px;top:434.33px;font-size:10.3px;line-height:10.3px;color:#2b2b2b;transform:scaleX(0.900)">CA</div>
<div class="pc" style="left:390.70px;top:430.75px;width:72.60px;height:16.55px;background:#e4f5d6"></div>
<div class="t" style="left:392.55px;top:434.33px;font-size:10.3px;line-height:10.3px;color:#2b2b2b;transform:scaleX(0.900)">1-Mar-05</div>
<div class="pc" style="left:465.00px;top:430.75px;width:61.80px;height:16.55px;background:#e4f5d6"></div>
<div class="t" style="left:466.85px;top:434.33px;font-size:10.3px;line-height:10.3px;color:#2b2b2b;transform:scaleX(0.900)">3000000</div>
<div class="pc" style="left:528.70px;top:430.75px;width:94.10px;height:16.55px;background:#e4f5d6"></div>
<div class="t" style="left:530.55px;top:434.33px;font-size:10.3px;line-height:10.3px;color:#2b2b2b;transform:scaleX(0.900)">USD</div>
<div class="pc" style="left:624.70px;top:430.75px;width:61.30px;height:16.55px;background:#e4f5d6"></div>
<div class="t" style="left:626.55px;top:434.33px;font-size:10.3px;line-height:10.3px;color:#2b2b2b;transform:scaleX(0.900)">a</div>
<div class="pc" style="left:7.10px;top:448.80px;width:98.90px;height:16.55px;background:#dcf0fb"></div>
<div class="t" style="left:8.95px;top:452.38px;font-size:10.3px;line-height:10.3px;color:#2b2b2b;transform:scaleX(0.900)">omnidrive</div>
<div class="pc" style="left:107.70px;top:448.80px;width:72.50px;height:16.55px;background:#dcf0fb"></div>
<div class="t" style="left:109.55px;top:452.38px;font-size:10.3px;line-height:10.3px;color:#2b2b2b;transform:scaleX(0.900)">Omnidrive</div>
<div class="pc" style="left:182.00px;top:448.80px;width:56.90px;height:16.55px;background:#dcf0fb"></div>
<div class="pc" style="left:241.00px;top:448.80px;width:57.60px;height:16.55px;background:#dcf0fb"></div>
<div class="t" style="left:242.85px;top:452.38px;font-size:10.3px;line-height:10.3px;color:#2b2b2b;transform:scaleX(0.900)">web</div>
<div class="pc" style="left:300.10px;top:448.80px;width:54.10px;height:16.55px;background:#dcf0fb"></div>
<div class="t" style="left:301.95px;top:452.38px;font-size:10.3px;line-height:10.3px;color:#2b2b2b;transform:scaleX(0.900)">Palo Alto</div>
<div class="pc" style="left:356.00px;top:448.80px;width:33.00px;height:16.55px;background:#dcf0fb"></div>
<div class="t" style="left:357.85px;top:452.38px;font-size:10.3px;line-height:10.3px;color:#2b2b2b;transform:scaleX(0.900)">CA</div>
<div class="pc" style="left:390.70px;top:448.80px;width:72.60px;height:16.55px;background:#dcf0fb"></div>
<div class="t" style="left:392.55px;top:452.38px;font-size:10.3px;line-height:10.3px;color:#2b2b2b;transform:scaleX(0.900)">1-Dec-06</div>
<div class="pc" style="left:465.00px;top:448.80px;width:61.80px;height:16.55px;background:#dcf0fb"></div>
<div class="t" style="left:466.85px;top:452.38px;font-size:10.3px;line-height:10.3px;color:#2b2b2b;transform:scaleX(0.900)">800000</div>
<div class="pc" style="left:528.70px;top:448.80px;width:94.10px;height:16.55px;background:#dcf0fb"></div>
<div class="t" style="left:530.55px;top:452.38px;font-size:10.3px;line-height:10.3px;color:#2b2b2b;transform:scaleX(0.900)">USD</div>
<div class="pc" style="left:624.70px;top:448.80px;width:61.30px;height:16.55px;background:#dcf0fb"></div>
<div class="t" style="left:626.55px;top:452.38px;font-size:10.3px;line-height:10.3px;color:#2b2b2b;transform:scaleX(0.900)">angel</div>
<div class="pc" style="left:7.10px;top:466.85px;width:98.90px;height:28.8px;background:#e4f5d6"></div>
<div class="t" style="left:8.95px;top:476.33px;font-size:10.3px;line-height:10.3px;color:#2b2b2b;transform:scaleX(0.900)">geni</div>
<div class="pc" style="left:107.70px;top:466.85px;width:72.50px;height:28.8px;background:#e4f5d6"></div>
<div class="t" style="left:109.55px;top:476.33px;font-size:10.3px;line-height:10.3px;color:#2b2b2b;transform:scaleX(0.900)">Geni</div>
<div class="pc" style="left:182.00px;top:466.85px;width:56.90px;height:28.8px;background:#e4f5d6"></div>
<div class="t" style="left:183.85px;top:476.33px;font-size:10.3px;line-height:10.3px;color:#2b2b2b;transform:scaleX(0.900)">18</div>
<div class="pc" style="left:241.00px;top:466.85px;width:57.60px;height:28.8px;background:#e4f5d6"></div>
<div class="t" style="left:242.85px;top:476.33px;font-size:10.3px;line-height:10.3px;color:#2b2b2b;transform:scaleX(0.900)">web</div>
<div class="pc" style="left:300.10px;top:466.85px;width:54.10px;height:28.8px;background:#e4f5d6"></div>
<div class="t" style="left:301.95px;top:470.23px;font-size:10.3px;line-height:10.3px;color:#2b2b2b;transform:scaleX(0.900)">West</div>
<div class="t" style="left:301.95px;top:482.13px;font-size:10.3px;line-height:10.3px;color:#2b2b2b;transform:scaleX(0.900)">Hollywood</div>
<div class="pc" style="left:356.00px;top:466.85px;width:33.00px;height:28.8px;background:#e4f5d6"></div>
<div class="t" style="left:357.85px;top:476.33px;font-size:10.3px;line-height:10.3px;color:#2b2b2b;transform:scaleX(0.900)">CA</div>
<div class="pc" style="left:390.70px;top:466.85px;width:72.60px;height:28.8px;background:#e4f5d6"></div>
<div class="t" style="left:392.55px;top:476.33px;font-size:10.3px;line-height:10.3px;color:#2b2b2b;transform:scaleX(0.900)">1-Jan-07</div>
<div class="pc" style="left:465.00px;top:466.85px;width:61.80px;height:28.8px;background:#e4f5d6"></div>
<div class="t" style="left:466.85px;top:476.33px;font-size:10.3px;line-height:10.3px;color:#2b2b2b;transform:scaleX(0.900)">1500000</div>
<div class="pc" style="left:528.70px;top:466.85px;width:94.10px;height:28.8px;background:#e4f5d6"></div>
<div class="t" style="left:530.55px;top:476.33px;font-size:10.3px;line-height:10.3px;color:#2b2b2b;transform:scaleX(0.900)">USD</div>
<div class="pc" style="left:624.70px;top:466.85px;width:61.30px;height:28.8px;background:#e4f5d6"></div>
<div class="t" style="left:626.55px;top:476.33px;font-size:10.3px;line-height:10.3px;color:#2b2b2b;transform:scaleX(0.900)">a</div>
<div class="pc" style="left:7.10px;top:497.15px;width:98.90px;height:28.8px;background:#dcf0fb"></div>
<div class="t" style="left:8.95px;top:506.63px;font-size:10.3px;line-height:10.3px;color:#2b2b2b;transform:scaleX(0.900)">geni</div>
<div class="pc" style="left:107.70px;top:497.15px;width:72.50px;height:28.8px;background:#dcf0fb"></div>
<div class="t" style="left:109.55px;top:506.63px;font-size:10.3px;line-height:10.3px;color:#2b2b2b;transform:scaleX(0.900)">Geni</div>
<div class="pc" style="left:182.00px;top:497.15px;width:56.90px;height:28.8px;background:#dcf0fb"></div>
<div class="t" style="left:183.85px;top:506.63px;font-size:10.3px;line-height:10.3px;color:#2b2b2b;transform:scaleX(0.900)">18</div>
<div class="pc" style="left:241.00px;top:497.15px;width:57.60px;height:28.8px;background:#dcf0fb"></div>
<div class="t" style="left:242.85px;top:506.63px;font-size:10.3px;line-height:10.3px;color:#2b2b2b;transform:scaleX(0.900)">web</div>
<div class="pc" style="left:300.10px;top:497.15px;width:54.10px;height:28.8px;background:#dcf0fb"></div>
<div class="t" style="left:301.95px;top:500.53px;font-size:10.3px;line-height:10.3px;color:#2b2b2b;transform:scaleX(0.900)">West</div>
<div class="t" style="left:301.95px;top:512.43px;font-size:10.3px;line-height:10.3px;color:#2b2b2b;transform:scaleX(0.900)">Hollywood</div>
<div class="pc" style="left:356.00px;top:497.15px;width:33.00px;height:28.8px;background:#dcf0fb"></div>
<div class="t" style="left:357.85px;top:506.63px;font-size:10.3px;line-height:10.3px;color:#2b2b2b;transform:scaleX(0.900)">CA</div>
<div class="pc" style="left:390.70px;top:497.15px;width:72.60px;height:28.8px;background:#dcf0fb"></div>
<div class="t" style="left:392.55px;top:506.63px;font-size:10.3px;line-height:10.3px;color:#2b2b2b;transform:scaleX(0.900)">1-Mar-07</div>
<div class="pc" style="left:465.00px;top:497.15px;width:61.80px;height:28.8px;background:#dcf0fb"></div>
<div class="t" style="left:466.85px;top:506.63px;font-size:10.3px;line-height:10.3px;color:#2b2b2b;transform:scaleX(0.900)">10000000</div>
<div class="pc" style="left:528.70px;top:497.15px;width:94.10px;height:28.8px;background:#dcf0fb"></div>
<div class="t" style="left:530.55px;top:506.63px;font-size:10.3px;line-height:10.3px;color:#2b2b2b;transform:scaleX(0.900)">USD</div>
<div class="pc" style="left:624.70px;top:497.15px;width:61.30px;height:28.8px;background:#dcf0fb"></div>
<div class="t" style="left:626.55px;top:506.63px;font-size:10.3px;line-height:10.3px;color:#2b2b2b;transform:scaleX(0.900)">b</div>
</div>
<div class="a" style="left:0;top:619px;width:974px;height:20px;background:#2f3032"></div>
<div class="a tex" style="left:293px;top:171.2px;width:277.5px;height:245.4px;border-radius:4px;background-color:#3b3b3b;box-shadow:0 1px 5px rgba(0,0,0,.45)"></div>
<svg class="a" style="left:284px;top:285.5px" width="10" height="19" viewBox="0 0 10 19"><path d="M0.6 9.3 L9.5 0.6 V18 Z" fill="#cdcdcd"/></svg>
<div class="t" style="left:304.59px;top:194.8px;font-size:9.8px;line-height:9.8px;color:#b5b5b5;transform:scaleX(0.931)">SELECT DATA TYPE FOR:</div>
<div class="t" style="left:423.05px;top:194.8px;font-size:9.8px;line-height:9.8px;color:#9fd0f5;transform:scaleX(1.007)">fundedDate</div>
<div class="a" style="left:302.1px;top:210.5px;width:159.3px;height:19px;border-radius:3.5px;background:#d6d6d6;box-shadow:inset 0 0 0 1.8px #2d6db3"></div>
<svg class="a" style="left:307px;top:215px" width="11" height="11" viewBox="0 0 11 11"><circle cx="4.6" cy="4.6" r="3.4" stroke="#555" stroke-width="1.1" fill="none"/><line x1="7.1" y1="7.1" x2="9.8" y2="9.8" stroke="#555" stroke-width="1.3"/></svg>
<div class="a" style="left:320.3px;top:215px;width:1px;height:11px;background:#333"></div>
<div class="t" style="left:321.57px;top:215.87px;font-size:9.6px;line-height:9.6px;color:#ababab;-webkit-text-stroke:0px">Search Data Types</div>
<div class="a" style="left:303.3px;top:232.6px;width:157px;height:179.6px;background:#fff"></div>
<div class="li" style="top:232.60px;background:#fff"></div>
<div class="t" style="left:306.81px;top:237.14px;font-size:9.4px;line-height:9.4px;color:#2755f3;transform:scaleX(0.890);-webkit-text-stroke:0.15px">VARCHAR(50)</div>
<div class="li" style="top:246.41px;background:#f1f1f1"></div>
<div class="t" style="left:306.81px;top:250.77px;font-size:9.4px;line-height:9.4px;color:#2755f3;transform:scaleX(0.890);-webkit-text-stroke:0.15px">VARCHAR(100)</div>
<div class="li" style="top:260.23px;background:#fff"></div>
<div class="t" style="left:306.81px;top:264.4px;font-size:9.4px;line-height:9.4px;color:#2755f3;transform:scaleX(0.890);-webkit-text-stroke:0.15px">VARCHAR(255)</div>
<div class="li" style="top:274.05px;background:#f1f1f1"></div>
<div class="t" style="left:306.81px;top:278.03px;font-size:9.4px;line-height:9.4px;color:#2755f3;transform:scaleX(0.890);-webkit-text-stroke:0.15px">CHAR(50)</div>
<div class="li" style="top:287.86px;background:#fff"></div>
<div class="t" style="left:306.81px;top:291.66px;font-size:9.4px;line-height:9.4px;color:#2755f3;transform:scaleX(0.890);-webkit-text-stroke:0.15px">CHAR(100)</div>
<div class="li" style="top:301.68px;background:#f1f1f1"></div>
<div class="t" style="left:306.81px;top:305.29px;font-size:9.4px;line-height:9.4px;color:#2755f3;transform:scaleX(0.890);-webkit-text-stroke:0.15px">CHAR(255)</div>
<div class="li" style="top:315.49px;background:#fff"></div>
<div class="t" style="left:306.81px;top:318.92px;font-size:9.4px;line-height:9.4px;color:#2755f3;transform:scaleX(0.890);-webkit-text-stroke:0.15px">TEXT</div>
<div class="li" style="top:329.31px;background:#f1f1f1"></div>
<div class="t" style="left:306.81px;top:332.55px;font-size:9.4px;line-height:9.4px;color:#2755f3;transform:scaleX(0.890);-webkit-text-stroke:0.15px">LONGTEXT</div>
<div class="li" style="top:343.12px;background:#fff"></div>
<div class="t" style="left:306.81px;top:346.18px;font-size:9.4px;line-height:9.4px;color:#2755f3;transform:scaleX(0.890);-webkit-text-stroke:0.15px">INT(11)</div>
<div class="li" style="top:356.94px;background:#f1f1f1"></div>
<div class="t" style="left:306.81px;top:359.81px;font-size:9.4px;line-height:9.4px;color:#2755f3;transform:scaleX(0.890);-webkit-text-stroke:0.15px">TINYINT(1)</div>
<div class="li" style="top:370.75px;background:#fff"></div>
<div class="t" style="left:306.81px;top:373.44px;font-size:9.4px;line-height:9.4px;color:#2755f3;transform:scaleX(0.890);-webkit-text-stroke:0.15px">TINYINT(4)</div>
<div class="li" style="top:384.56px;background:#f1f1f1"></div>
<div class="t" style="left:306.81px;top:387.07px;font-size:9.4px;line-height:9.4px;color:#2755f3;transform:scaleX(0.890);-webkit-text-stroke:0.15px">SMALLINT(6)</div>
<div class="li" style="top:398.38px;background:#fff"></div>
<div class="t" style="left:306.81px;top:400.7px;font-size:9.4px;line-height:9.4px;color:#2755f3;transform:scaleX(0.890);-webkit-text-stroke:0.15px">MEDIUMINT(9)</div>
<div class="btn" style="left:472px;top:233.1px;width:88.1px;height:37.7px"></div>
<div class="t" style="left:492.14px;top:247.47px;font-size:9.6px;line-height:9.6px;color:#0dbd34;transform:scaleX(0.991);-webkit-text-stroke:0.3px">NOT NULL</div>
<div class="btn" style="left:473.4px;top:280px;width:85.2px;height:34.8px"></div>
<div class="t" style="left:503.12px;top:292.87px;font-size:9.6px;line-height:9.6px;color:#111;transform:scaleX(1.014);-webkit-text-stroke:0.05px">NULL</div>
<div class="a" style="left:367.7px;top:426.8px;width:372.5px;height:102.2px;background:#fff"></div>
<div class="t" style="left:404.66px;top:450.41px;font-size:30px;line-height:30px;color:#fe0b16;transform:scaleX(1.026)">Customize</div>
<div class="t" style="left:558.32px;top:450.41px;font-size:30px;line-height:30px;color:#3db0fb;transform:scaleX(1.023)">SQL</div>
<div class="t" style="left:628.12px;top:450.41px;font-size:30px;line-height:30px;color:#fe0b16;transform:scaleX(1.034)">Field</div>
<div class="t" style="left:476.59px;top:485.21px;font-size:30px;line-height:30px;color:#0c4ff2">Data</div>
<div class="t" style="left:549.59px;top:485.21px;font-size:30px;line-height:30px;color:#0c4ff2;transform:scaleX(1.016)">Types</div>
</body></html>
